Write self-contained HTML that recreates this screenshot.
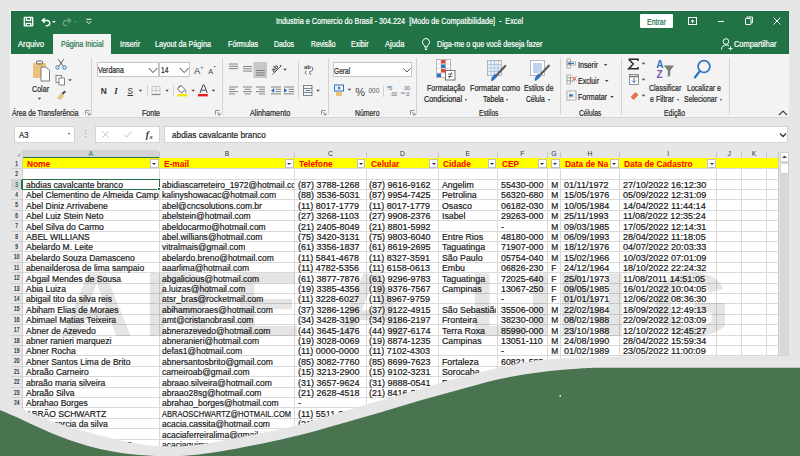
<!DOCTYPE html><html><head><meta charset="utf-8"><title>Excel</title><style>
*{margin:0;padding:0;box-sizing:border-box}
html,body{width:800px;height:456px;overflow:hidden}
body{background:#e6e6e6;font-family:"Liberation Sans",sans-serif;position:relative;color:#262626}
.a{position:absolute;white-space:nowrap}
.t{position:absolute;white-space:nowrap;line-height:1}
.gl{position:absolute;background:#dadada}
.fb{position:absolute;width:8.6px;height:9.2px;background:#fff;border:1px solid #c0c0c8}
.fb:after{content:"";position:absolute;left:1.3px;top:3px;border-left:2.1px solid transparent;border-right:2.1px solid transparent;border-top:2.6px solid #333}
.dd{position:absolute;width:0;height:0;border-left:1.8px solid transparent;border-right:1.8px solid transparent;border-top:2.2px solid #444}
.sep{position:absolute;width:1px;background:#d4d4d4;top:58px;height:57px}
.clip{position:absolute;overflow:hidden}
.rs{-webkit-text-stroke:0.2px currentColor}
</style></head><body>
<div class="a" style="left:10.2px;top:10.2px;width:779.3px;height:108px;border:1px solid #f4f4f4;border-bottom:none"></div>
<div class="a" style="left:11px;top:11px;width:777.5px;height:43px;background:#217346;box-shadow:inset 1px 1px 0 #1c6a3e,inset -1px 0 0 #1c6a3e"></div>
<div class="a" style="left:53.3px;top:33.5px;width:57.7px;height:21px;background:#f3f3f3"></div>
<svg class="a" style="left:22px;top:15px" width="72" height="14" viewBox="0 0 72 14">
<g fill="none" stroke="#fff" stroke-width="1.3">
<rect x="2.3" y="2.3" width="8.4" height="8.6" rx="0.5"/>
<path d="M4.5 2.3v3h4.2v-3M4.2 10.9v-2.6h4.6v2.6"/>
<path d="M21 5.5h4.2a2.6 2.6 0 0 1 0 5.2h-1.5M22.8 3.2L20.3 5.5L22.8 7.8" stroke-width="1.4"/>
</g>
<path d="M30.2 6.0h3.6l-1.8 2z" fill="#fff"/>
<g fill="none" stroke="#6fa585" stroke-width="1.3"><path d="M48 5.5h-4.2a2.6 2.6 0 0 0 0 5.2h1.5M46.2 3.2L48.7 5.5L46.2 7.8"/></g>
<path d="M52 6.2h2.6l-1.3 1.4z" fill="#6fa585"/>
<g fill="none" stroke="#fff" stroke-width="1"><path d="M64.3 4.3h5"/><path d="M64.5 6.3l2.3 2.3l2.3-2.3"/></g>
</svg>
<div class="t rs" style="left:276.20px;top:15.87px;font:normal normal 8.3px &quot;Liberation Sans&quot;;color:#fff;transform:scaleX(0.8695);transform-origin:0 0;">Industria e Comercio do Brasil - 304.224 &nbsp;[Modo de Compatibilidade] &nbsp;- &nbsp;Excel</div>
<div class="a" style="left:640.4px;top:14.4px;width:32.2px;height:13.2px;background:#fff;border-radius:1px"></div>
<div class="t rs" style="left:647.00px;top:17.27px;font:normal normal 8.3px &quot;Liberation Sans&quot;;color:#217346;transform:scaleX(0.8409);transform-origin:0 0;">Entrar</div>
<svg class="a" style="left:686px;top:15px" width="100" height="12" viewBox="0 0 100 12">
<g fill="none" stroke="#fff" stroke-width="1">
<rect x="2.5" y="2.5" width="8" height="7"/><path d="M4.7 6.8l1.8-1.8l1.8 1.8M6.5 5v3"/>
<path d="M32 6.5h6"/>
<rect x="59.5" y="3.5" width="5.5" height="6" rx="0.6"/><path d="M61 3V2h5.5v5.8h-1.4"/>
<path d="M87.5 2.5l7 7M94.5 2.5l-7 7"/>
</g></svg>
<div class="t rs" style="left:18.30px;top:39.49px;font:normal normal 8.4px &quot;Liberation Sans&quot;;color:#fff;transform:scaleX(0.9156);transform-origin:0 0;">Arquivo</div>
<div class="t rs" style="left:60.80px;top:39.49px;font:normal normal 8.4px &quot;Liberation Sans&quot;;color:#217346;transform:scaleX(0.8531);transform-origin:0 0;">Página Inicial</div>
<div class="t rs" style="left:119.60px;top:39.49px;font:normal normal 8.4px &quot;Liberation Sans&quot;;color:#fff;transform:scaleX(0.8638);transform-origin:0 0;">Inserir</div>
<div class="t rs" style="left:155.30px;top:39.49px;font:normal normal 8.4px &quot;Liberation Sans&quot;;color:#fff;transform:scaleX(0.8575);transform-origin:0 0;">Layout da Página</div>
<div class="t rs" style="left:227.60px;top:39.49px;font:normal normal 8.4px &quot;Liberation Sans&quot;;color:#fff;transform:scaleX(0.8653);transform-origin:0 0;">Fórmulas</div>
<div class="t rs" style="left:274.00px;top:39.49px;font:normal normal 8.4px &quot;Liberation Sans&quot;;color:#fff;transform:scaleX(0.8261);transform-origin:0 0;">Dados</div>
<div class="t rs" style="left:310.50px;top:39.49px;font:normal normal 8.4px &quot;Liberation Sans&quot;;color:#fff;transform:scaleX(0.8064);transform-origin:0 0;">Revisão</div>
<div class="t rs" style="left:351.00px;top:39.49px;font:normal normal 8.4px &quot;Liberation Sans&quot;;color:#fff;transform:scaleX(0.8357);transform-origin:0 0;">Exibir</div>
<div class="t rs" style="left:384.60px;top:39.49px;font:normal normal 8.4px &quot;Liberation Sans&quot;;color:#fff;transform:scaleX(0.9057);transform-origin:0 0;">Ajuda</div>
<div class="t rs" style="left:437.00px;top:39.49px;font:normal normal 8.4px &quot;Liberation Sans&quot;;color:#fff;transform:scaleX(0.8584);transform-origin:0 0;">Diga-me o que você deseja fazer</div>
<div class="t rs" style="left:733.50px;top:39.49px;font:normal normal 8.4px &quot;Liberation Sans&quot;;color:#fff;transform:scaleX(0.8865);transform-origin:0 0;">Compartilhar</div>
<svg class="a" style="left:420px;top:37px" width="12" height="14" viewBox="0 0 12 14"><g fill="none" stroke="#fff" stroke-width="1"><path d="M6 1.5a3.6 3.6 0 0 0-2.2 6.4c.6.5.8 1.1.8 1.8h2.8c0-.7.2-1.3.8-1.8A3.6 3.6 0 0 0 6 1.5z"/><path d="M4.7 11h2.6M5 12.5h2"/></g></svg>
<svg class="a" style="left:720px;top:37px" width="14" height="14" viewBox="0 0 14 14"><g fill="none" stroke="#fff" stroke-width="1"><circle cx="6" cy="4.5" r="2.8"/><path d="M1.5 12.5c0-2.8 2-4.5 4.5-4.5c1.2 0 2.2.3 3 1"/><path d="M10.5 9.5v4M8.5 11.5h4"/></g></svg>
<div class="a" style="left:11px;top:54px;width:777.5px;height:64.3px;background:#f3f3f3;border-bottom:1px solid #d6d6d6"></div>
<div class="sep" style="left:91.0px"></div>
<div class="sep" style="left:221.8px"></div>
<div class="sep" style="left:327.8px"></div>
<div class="sep" style="left:416.2px"></div>
<div class="sep" style="left:559.5px"></div>
<div class="sep" style="left:621.3px"></div>
<div class="sep" style="left:728.7px"></div>
<div class="a" style="left:146.5px;top:85px;width:1px;height:12px;background:#d2d2d2"></div>
<div class="a" style="left:173px;top:85px;width:1px;height:12px;background:#d2d2d2"></div>
<div class="a" style="left:297.8px;top:61px;width:1px;height:38px;background:#d2d2d2"></div>
<div class="a" style="left:383px;top:85px;width:1px;height:12px;background:#d2d2d2"></div>
<div class="t rs" style="left:12.30px;top:108.76px;font:normal normal 8.2px &quot;Liberation Sans&quot;;color:#262626;transform:scaleX(0.8265);transform-origin:0 0;">Área de Transferência</div>
<div class="t rs" style="left:142.00px;top:108.76px;font:normal normal 8.2px &quot;Liberation Sans&quot;;color:#262626;transform:scaleX(0.8597);transform-origin:0 0;">Fonte</div>
<div class="t rs" style="left:249.50px;top:108.76px;font:normal normal 8.2px &quot;Liberation Sans&quot;;color:#262626;transform:scaleX(0.8832);transform-origin:0 0;">Alinhamento</div>
<div class="t rs" style="left:354.50px;top:108.76px;font:normal normal 8.2px &quot;Liberation Sans&quot;;color:#262626;transform:scaleX(0.8413);transform-origin:0 0;">Número</div>
<div class="t rs" style="left:478.60px;top:108.76px;font:normal normal 8.2px &quot;Liberation Sans&quot;;color:#262626;transform:scaleX(0.8045);transform-origin:0 0;">Estilos</div>
<div class="t rs" style="left:578.80px;top:108.76px;font:normal normal 8.2px &quot;Liberation Sans&quot;;color:#262626;transform:scaleX(0.8130);transform-origin:0 0;">Células</div>
<div class="t rs" style="left:664.00px;top:108.76px;font:normal normal 8.2px &quot;Liberation Sans&quot;;color:#262626;transform:scaleX(0.8389);transform-origin:0 0;">Edição</div>
<svg class="a" style="left:85px;top:110px" width="6" height="6" viewBox="0 0 6 6"><g fill="none" stroke="#777" stroke-width="0.8"><path d="M0.5 4.5v-4h4"/><path d="M2 2l3 3M5 2.8V5H2.8"/></g></svg>
<svg class="a" style="left:214.5px;top:110px" width="6" height="6" viewBox="0 0 6 6"><g fill="none" stroke="#777" stroke-width="0.8"><path d="M0.5 4.5v-4h4"/><path d="M2 2l3 3M5 2.8V5H2.8"/></g></svg>
<svg class="a" style="left:320.5px;top:110px" width="6" height="6" viewBox="0 0 6 6"><g fill="none" stroke="#777" stroke-width="0.8"><path d="M0.5 4.5v-4h4"/><path d="M2 2l3 3M5 2.8V5H2.8"/></g></svg>
<svg class="a" style="left:409.8px;top:110px" width="6" height="6" viewBox="0 0 6 6"><g fill="none" stroke="#777" stroke-width="0.8"><path d="M0.5 4.5v-4h4"/><path d="M2 2l3 3M5 2.8V5H2.8"/></g></svg>
<svg class="a" style="left:778px;top:110px" width="10" height="6" viewBox="0 0 10 6"><path d="M1 5l4-4l4 4" fill="none" stroke="#444" stroke-width="1.2"/></svg>
<svg class="a" style="left:30px;top:57px" width="45" height="48" viewBox="0 0 45 48">
<rect x="3" y="6" width="13" height="15" rx="1" fill="#e9c27c"/>
<rect x="6.5" y="4" width="6" height="3" rx="1" fill="none" stroke="#6b6b6b" stroke-width="1"/>
<path d="M11 10h5l3.5 3.5V24H11z" fill="#fff" stroke="#6b6b6b" stroke-width="0.9"/>
<g fill="none" stroke="#555" stroke-width="0.9"><path d="M28 2l5 7M34 2l-5 7"/></g>
<g fill="none" stroke="#2f73c0" stroke-width="1"><circle cx="27.5" cy="10.5" r="1.7"/><circle cx="34.5" cy="10.5" r="1.7"/></g>
<g fill="#fff" stroke="#6b6b6b" stroke-width="0.8"><rect x="26" y="18.5" width="5.5" height="7"/><rect x="29" y="21" width="5.5" height="7"/></g>
<path d="M38.2 22.3h3.6l-1.8 2z" fill="#444"/>
<path d="M27 41l4-4.5l3 2.5l-4 4z" fill="#e9c27c"/><path d="M31.5 36.5l3-3l1.5 1.3l-3 3z" fill="#444"/>
<path d="M7.7 40.8h3.6l-1.8 2z" fill="#444"/>
</svg>
<div class="t rs" style="left:32.00px;top:84.47px;font:normal normal 8.3px &quot;Liberation Sans&quot;;color:#262626;transform:scaleX(0.8574);transform-origin:0 0;">Colar</div>
<div class="a" style="left:96.6px;top:62.2px;width:62px;height:15.2px;background:#fff;border:1px solid #c6c6c6"></div>
<div class="a" style="left:158.6px;top:62.2px;width:31.4px;height:15.2px;background:#fff;border:1px solid #c6c6c6"></div>
<div class="t rs" style="left:98.20px;top:65.20px;font:normal normal 8.5px &quot;Liberation Sans&quot;;color:#262626;transform:scaleX(0.8147);transform-origin:0 0;">Verdana</div>
<div class="t rs" style="left:161.00px;top:65.20px;font:normal normal 8.5px &quot;Liberation Sans&quot;;color:#262626;transform:scaleX(0.7827);transform-origin:0 0;">14</div>
<svg class="a" style="left:140px;top:66px" width="80" height="10" viewBox="0 0 80 10"><g fill="none" stroke="#444" stroke-width="1"><path d="M8.6 2l4.4 4.6l4.4-4.6M39.8 2l4.4 4.6l4.4-4.6"/></g>
<text x="54" y="8.3" font-family="Liberation Sans" font-size="9.5" fill="#444">A</text><path d="M60.5 2.2l1.4-1.8l1.4 1.8z" fill="#2f73c0"/>
<text x="68.3" y="8.3" font-family="Liberation Sans" font-size="7.3" fill="#444">A</text><path d="M73.3 -0.2h2.8l-1.4 1.8z" fill="#2f73c0"/>
</svg>
<div class="t" style="left:100.8px;top:87px;font-size:8.3px;font-weight:bold;color:#333">N</div>
<div class="t" style="left:114.3px;top:86.6px;font-size:8.8px;font-style:italic;font-weight:bold;font-family:'Liberation Serif';color:#333">I</div>
<div class="t" style="left:127.5px;top:87px;font-size:8.3px;text-decoration:underline;color:#333">S</div>
<svg class="a" style="left:136px;top:83.3px" width="82" height="16" viewBox="0 0 82 16">
<path d="M2.7 6.8h3.6l-1.8 2z" fill="#444"/>
<g fill="none" stroke="#a5a5a5" stroke-width="0.8"><path d="M16 3.5h8v8M16 3.5v8" stroke-dasharray="1 0.6"/><path d="M20 3.5v8M16 7.5h8" stroke-dasharray="1 0.6"/></g><path d="M15.6 11.6h8.8" stroke="#777" stroke-width="1"/>
<path d="M29.2 6.8h3.6l-1.8 2z" fill="#444"/>
<path d="M45 2.5l4 4l-3.5 3.5l-4-4z" fill="#fff" stroke="#555" stroke-width="0.9"/><path d="M42 4.5l3-2" stroke="#555" stroke-width="0.9"/><path d="M49.5 7c.9 1.1 1.2 2.3.2 2.7c-.7-.4-.5-1.5-.2-2.7z" fill="#2f73c0"/>
<rect x="41.5" y="11" width="10" height="2.4" fill="#f5e400"/>
<path d="M55.4 6.8h3.6l-1.8 2z" fill="#444"/>
<path d="M64 10l3-8h1.2l3 8M65.2 7.2h4.6" fill="none" stroke="#444" stroke-width="1"/>
<rect x="62" y="11" width="9.8" height="2.4" fill="#e81d1d"/>
<path d="M75.7 6.8h3.6l-1.8 2z" fill="#444"/>
</svg>
<svg class="a" style="left:226px;top:60px" width="100" height="40" viewBox="0 0 100 40">
<rect x="27.5" y="2" width="13.5" height="16" fill="#c8c8c8"/>
<g stroke="#777" stroke-width="0.9">
<path d="M3 4h9M3 6.3h9M3 8.6h9"/>
<path d="M17 6.5h9M17 8.8h9M17 11.1h9"/>
<path d="M30 10.5h9M30 12.8h9M30 15.1h9"/>
<path d="M3 27h9M3 29.3h6M3 31.6h9M3 33.9h6"/>
<path d="M17 27h9M18.5 29.3h6M17 31.6h9M18.5 33.9h6"/>
<path d="M30 27h9M33 29.3h6M30 31.6h9M33 33.9h6"/>
<path d="M45 27h10M49.5 29.3h5.5M49.5 31.6h5.5M45 33.9h10"/>
<path d="M58 27h10M62.5 29.3h5.5M62.5 31.6h5.5M58 33.9h10"/>
</g>
<path d="M45 30.5l3.2-2.4v4.8z" fill="#2f73c0"/>
<path d="M58 28.1v4.8l3.2-2.4z" fill="#2f73c0"/>
<text x="0" y="0" transform="translate(47.5 12.2) rotate(-45)" font-family="Liberation Sans" font-weight="bold" font-size="6.2" fill="#444">ab</text><path d="M46.5 14.5l8.5-8.5" stroke="#444" stroke-width="0.9"/><path d="M53.5 5.5l2-0.6l-0.6 2z" fill="#444"/>
<path d="M57.2 8.8h3.6l-1.8 2z" fill="#444"/>
<text x="78" y="9" font-family="Liberation Sans" font-weight="bold" font-size="6" fill="#444">ab</text><path d="M85.5 6.5c1.8 1 1.8 3.6 0 4.6l-2.5 1.2M80.5 10.5c-1.6 1-1.6 3 0 4" fill="none" stroke="#444" stroke-width="0.8"/><path d="M83 13.2l2.5 0.3l-1 1.5z" fill="#2f73c0"/>
<g fill="none" stroke="#777" stroke-width="0.9"><rect x="77.5" y="25.5" width="8.5" height="10"/><path d="M77.5 28.5h8.5M77.5 32.5h8.5"/></g><path d="M79.5 30.5h4.5" stroke="#2f73c0" stroke-width="0.9"/>
<path d="M90.2 29.8h3.6l-1.8 2z" fill="#444"/>
</svg>
<div class="a" style="left:332.6px;top:62.4px;width:79.4px;height:14.9px;background:#fff;border:1px solid #c6c6c6"></div>
<div class="t rs" style="left:334.40px;top:65.58px;font:normal normal 9.0px &quot;Liberation Sans&quot;;color:#262626;transform:scaleX(0.7361);transform-origin:0 0;">Geral</div>
<svg class="a" style="left:330px;top:62px" width="85" height="40" viewBox="0 0 85 40">
<path d="M73.5 6.5l3.5 3.5l3.5-3.5" fill="none" stroke="#444" stroke-width="0.9"/>
<rect x="4.5" y="23" width="9" height="6" fill="none" stroke="#2f73c0" stroke-width="1"/><circle cx="9" cy="26" r="1.3" fill="#2f73c0"/>
<rect x="6" y="30" width="6" height="4" fill="#e9c27c"/>
<path d="M17.7 26.8h3.6l-1.8 2z" fill="#444"/>
<text x="25.3" y="33.8" font-family="Liberation Sans" font-size="11" fill="#444">%</text>
<text x="38.5" y="31" font-family="Liberation Sans" font-size="6.5" fill="#555">000</text>
<text x="58" y="28" font-family="Liberation Sans" font-size="5" fill="#555">.0</text><text x="60" y="33.5" font-family="Liberation Sans" font-size="5" fill="#555">.00</text>
<path d="M57 25h4" stroke="#2f73c0" stroke-width="0.9"/>
<text x="73" y="28" font-family="Liberation Sans" font-size="5" fill="#555">.00</text><text x="75" y="33.5" font-family="Liberation Sans" font-size="5" fill="#555">.0</text>
<path d="M71 31h4" stroke="#2f73c0" stroke-width="0.9"/>
</svg>
<svg class="a" style="left:430px;top:58px" width="125" height="25" viewBox="0 0 125 25">
<g fill="#fff" stroke="#9a9a9a" stroke-width="0.7"><rect x="6.5" y="1.5" width="14" height="18"/></g>
<g stroke="#bdbdbd" stroke-width="0.6"><path d="M6.5 6h14M6.5 10.5h14M6.5 15h14M11 1.5v18M15.8 1.5v18"/></g>
<rect x="11" y="2" width="4.5" height="3.5" fill="#e8443a"/><rect x="11" y="6.5" width="4.5" height="3.5" fill="#2f73c0"/><rect x="11" y="11" width="4.5" height="3.5" fill="#e8443a"/><rect x="7" y="15.5" width="4" height="3.5" fill="#2f73c0"/>
<rect x="15.5" y="12.5" width="9.5" height="9.5" fill="#fff" stroke="#555" stroke-width="0.8"/><path d="M18 16h4.5M18 18.5h4.5M21.5 14.5l-2.5 6" stroke="#333" stroke-width="0.7"/>
<g fill="#e6eef8" stroke="#9a9a9a" stroke-width="0.7"><rect x="57.5" y="2.5" width="14" height="15"/></g>
<g stroke="#9fb8d6" stroke-width="0.7"><path d="M57.5 6.5h14M57.5 10h14M57.5 13.5h14M61 2.5v15M64.5 2.5v15M68 2.5v15"/></g>
<path d="M61.2 23.3c-0.6-2.6 1.2-5.6 3.8-7.6l2.6 2.6c-2 2.6-4.4 4.6-6.4 5z" fill="#2f73c0"/><path d="M67 16.8l8.3-8.8" stroke="#5a5a5a" stroke-width="2.2" stroke-linecap="round"/>
<g fill="#fff" stroke="#9a9a9a" stroke-width="0.7"><rect x="100.5" y="2.5" width="14" height="15"/></g>
<rect x="103" y="5" width="9" height="10" fill="#bcd4ee"/>
<path d="M104.7 23c-0.6-2.6 1.2-5.6 3.8-7.6l2.6 2.6c-2 2.6-4.4 4.6-6.4 5z" fill="#2f73c0"/><path d="M110.5 16.5l8.3-8.8" stroke="#5a5a5a" stroke-width="2.2" stroke-linecap="round"/>
</svg>
<div class="t rs" style="left:426.60px;top:84.06px;font:normal normal 8.2px &quot;Liberation Sans&quot;;color:#262626;transform:scaleX(0.8699);transform-origin:0 0;">Formatação</div>
<div class="t rs" style="left:424.00px;top:94.66px;font:normal normal 8.2px &quot;Liberation Sans&quot;;color:#262626;transform:scaleX(0.8882);transform-origin:0 0;">Condicional</div>
<div class="t rs" style="left:470.00px;top:84.06px;font:normal normal 8.2px &quot;Liberation Sans&quot;;color:#262626;transform:scaleX(0.9008);transform-origin:0 0;">Formatar como</div>
<div class="t rs" style="left:482.60px;top:94.66px;font:normal normal 8.2px &quot;Liberation Sans&quot;;color:#262626;transform:scaleX(0.8622);transform-origin:0 0;">Tabela</div>
<div class="t rs" style="left:523.60px;top:84.06px;font:normal normal 8.2px &quot;Liberation Sans&quot;;color:#262626;transform:scaleX(0.8283);transform-origin:0 0;">Estilos de</div>
<div class="t rs" style="left:526.00px;top:94.66px;font:normal normal 8.2px &quot;Liberation Sans&quot;;color:#262626;transform:scaleX(0.8013);transform-origin:0 0;">Célula</div>
<div class="dd" style="left:464.5px;top:98.5px"></div>
<div class="dd" style="left:505.5px;top:98.5px"></div>
<div class="dd" style="left:547.5px;top:98.5px"></div>
<svg class="a" style="left:564px;top:57px" width="60" height="46" viewBox="0 0 60 46">
<g fill="#fff" stroke="#8a8a8a" stroke-width="0.7"><rect x="3" y="2" width="3.5" height="3"/><rect x="3" y="5" width="3.5" height="3"/><rect x="3" y="8" width="3.5" height="3"/><rect x="6.5" y="5" width="5" height="3"/></g>
<path d="M5 6.5h5" stroke="#2f73c0" stroke-width="1"/><path d="M3.5 6.5l2-1.5v3z" fill="#2f73c0"/>
<g fill="#fff" stroke="#8a8a8a" stroke-width="0.7"><rect x="3" y="18" width="3.5" height="3"/><rect x="3" y="21" width="3.5" height="3"/><rect x="3" y="24" width="3.5" height="3"/><rect x="6.5" y="21" width="4" height="3"/></g>
<path d="M8.5 19.5l4 4M12.5 19.5l-4 4" stroke="#e8443a" stroke-width="0.9"/>
<g fill="#fff" stroke="#8a8a8a" stroke-width="0.7"><rect x="3" y="34" width="9" height="9"/></g>
<path d="M3 37h9M3 40h9M6 34v9" stroke="#b0b0b0" stroke-width="0.5"/><rect x="5" y="37.5" width="4" height="2" fill="#2f73c0"/>
<path d="M39.8 7h3.6l-1.8 1.9zM41 23h3.6l-1.8 1.9zM46.2 39h3.6l-1.8 1.9z" fill="#444"/>
</svg>
<div class="t rs" style="left:578.00px;top:60.96px;font:normal normal 8.2px &quot;Liberation Sans&quot;;color:#262626;transform:scaleX(0.8792);transform-origin:0 0;">Inserir</div>
<div class="t rs" style="left:578.00px;top:76.96px;font:normal normal 8.2px &quot;Liberation Sans&quot;;color:#262626;transform:scaleX(0.8548);transform-origin:0 0;">Excluir</div>
<div class="t rs" style="left:578.00px;top:92.96px;font:normal normal 8.2px &quot;Liberation Sans&quot;;color:#262626;transform:scaleX(0.8732);transform-origin:0 0;">Formatar</div>
<svg class="a" style="left:626px;top:57px" width="100" height="46" viewBox="0 0 100 46">
<path d="M2.5 2.2h9.5v1.8M2.7 2.2l4.6 4.8l-4.6 4.8h9.3v-1.8" fill="none" stroke="#262626" stroke-width="1.5"/>
<path d="M15.7 5.8h3.6l-1.8 2z" fill="#444"/>
<rect x="3.5" y="17.5" width="9" height="10" fill="#fff" stroke="#777" stroke-width="0.8"/><path d="M3.5 19.5h9" stroke="#777" stroke-width="1.6"/><path d="M8 21v4.5M6 23.5l2 2l2-2" fill="none" stroke="#2f73c0" stroke-width="1"/>
<path d="M15.7 21.8h3.6l-1.8 2z" fill="#444"/>
<path d="M4.5 40l5-5l3 3l-5 5z" fill="#e8744a"/>
<path d="M15.7 37.8h3.6l-1.8 2z" fill="#444"/>
<text x="30.2" y="11.2" font-family="Liberation Sans" font-weight="bold" font-size="10" fill="#2f73c0">A</text>
<text x="30.6" y="21.2" font-family="Liberation Sans" font-weight="bold" font-size="10" fill="#7a5aa8">Z</text>
<path d="M37.8 8.5h10.3l-3.9 5v5.2l-2.4 1.2v-6.4z" fill="#7d7d7d"/>
<circle cx="78" cy="9.6" r="5.9" fill="none" stroke="#2f73c0" stroke-width="1.7"/><path d="M73.9 14l-5 6.5" stroke="#2f73c0" stroke-width="2.2" stroke-linecap="round"/>
</svg>
<div class="t rs" style="left:648.80px;top:84.06px;font:normal normal 8.2px &quot;Liberation Sans&quot;;color:#262626;transform:scaleX(0.8528);transform-origin:0 0;">Classificar</div>
<div class="t rs" style="left:650.00px;top:94.66px;font:normal normal 8.2px &quot;Liberation Sans&quot;;color:#262626;transform:scaleX(0.8649);transform-origin:0 0;">e Filtrar</div>
<div class="t rs" style="left:687.00px;top:84.06px;font:normal normal 8.2px &quot;Liberation Sans&quot;;color:#262626;transform:scaleX(0.8587);transform-origin:0 0;">Localizar e</div>
<div class="t rs" style="left:684.00px;top:94.66px;font:normal normal 8.2px &quot;Liberation Sans&quot;;color:#262626;transform:scaleX(0.8530);transform-origin:0 0;">Selecionar</div>
<div class="dd" style="left:676.5px;top:98.5px"></div>
<div class="dd" style="left:719.5px;top:98.5px"></div>
<div class="a" style="left:14px;top:125.8px;width:61.4px;height:17.5px;background:#fff;border:1px solid #d4d4d4"></div>
<div class="t rs" style="left:18.75px;top:130.47px;font:normal normal 8.3px &quot;Liberation Sans&quot;;color:#262626;transform:scaleX(0.9312);transform-origin:0 0;">A3</div>
<div class="dd" style="left:67.5px;top:133px;border-top-width:2.5px;border-top-color:#444"></div>
<div class="a" style="left:84.5px;top:130px;width:1px;height:1px;background:#999;box-shadow:0 3px #999,0 6px #999"></div>
<div class="a" style="left:94.5px;top:125.8px;width:65.7px;height:17.5px;background:#fff;border:1px solid #d4d4d4"></div>
<svg class="a" style="left:95px;top:126px" width="65" height="17" viewBox="0 0 65 17"><g fill="none" stroke="#b5b5b5" stroke-width="0.9"><path d="M7.5 5.5l6 6M13.5 5.5l-6 6"/><path d="M29 8.5l2.5 2.5l5-5.5"/></g>
<text x="50.8" y="12.2" font-family="Liberation Serif" font-style="italic" font-weight="bold" font-size="9.5" fill="#333">f</text><text x="54.6" y="12.6" font-family="Liberation Serif" font-style="italic" font-weight="bold" font-size="6.5" fill="#333">x</text></svg>
<div class="a" style="left:163.8px;top:125.8px;width:623.8px;height:17.5px;background:#fff;border:1px solid #d4d4d4"></div>
<div class="t rs" style="left:171.70px;top:130.47px;font:normal normal 8.3px &quot;Liberation Sans&quot;;color:#262626;transform:scaleX(0.9969);transform-origin:0 0;">abdias cavalcante branco</div>
<svg class="a" style="left:779px;top:132px" width="8" height="6" viewBox="0 0 8 6"><path d="M1 1.5l3 3l3-3" fill="none" stroke="#333" stroke-width="1.3"/></svg>
<div class="a" style="left:22.3px;top:158.3px;width:755.9000000000001px;height:291.2px;background:#fff"></div>
<div class="a" style="left:11px;top:150.3px;width:767.2px;height:8px;background:#e6e6e6"></div>
<div class="a" style="left:22.3px;top:150.3px;width:137.2px;height:8px;background:#d3d3d3;border-bottom:1.5px solid #217346"></div>
<div class="a" style="left:11px;top:158.3px;width:11.3px;height:291.2px;background:#e6e6e6"></div>
<div class="a" style="left:11px;top:179.10000000000002px;width:11.3px;height:10.4px;background:#d3d3d3;border-right:1.5px solid #217346"></div>
<div class="gl" style="left:159.00px;top:158.3px;width:1px;height:291.2px"></div>
<div class="a" style="left:159.00px;top:151.5px;width:1px;height:6px;background:#c8c8c8"></div>
<div class="t" style="left:80.90px;width:20px;text-align:center;top:151.0px;font-size:6.8px;color:#217346">A</div>
<div class="gl" style="left:294.00px;top:158.3px;width:1px;height:291.2px"></div>
<div class="a" style="left:294.00px;top:151.5px;width:1px;height:6px;background:#c8c8c8"></div>
<div class="t" style="left:217.00px;width:20px;text-align:center;top:151.0px;font-size:6.8px;color:#333">B</div>
<div class="gl" style="left:365.80px;top:158.3px;width:1px;height:291.2px"></div>
<div class="a" style="left:365.80px;top:151.5px;width:1px;height:6px;background:#c8c8c8"></div>
<div class="t" style="left:320.40px;width:20px;text-align:center;top:151.0px;font-size:6.8px;color:#333">C</div>
<div class="gl" style="left:438.30px;top:158.3px;width:1px;height:291.2px"></div>
<div class="a" style="left:438.30px;top:151.5px;width:1px;height:6px;background:#c8c8c8"></div>
<div class="t" style="left:392.55px;width:20px;text-align:center;top:151.0px;font-size:6.8px;color:#333">D</div>
<div class="gl" style="left:496.50px;top:158.3px;width:1px;height:291.2px"></div>
<div class="a" style="left:496.50px;top:151.5px;width:1px;height:6px;background:#c8c8c8"></div>
<div class="t" style="left:457.90px;width:20px;text-align:center;top:151.0px;font-size:6.8px;color:#333">E</div>
<div class="gl" style="left:547.00px;top:158.3px;width:1px;height:291.2px"></div>
<div class="a" style="left:547.00px;top:151.5px;width:1px;height:6px;background:#c8c8c8"></div>
<div class="t" style="left:512.25px;width:20px;text-align:center;top:151.0px;font-size:6.8px;color:#333">F</div>
<div class="gl" style="left:560.00px;top:158.3px;width:1px;height:291.2px"></div>
<div class="a" style="left:560.00px;top:151.5px;width:1px;height:6px;background:#c8c8c8"></div>
<div class="t" style="left:544.00px;width:20px;text-align:center;top:151.0px;font-size:6.8px;color:#333">G</div>
<div class="gl" style="left:619.10px;top:158.3px;width:1px;height:291.2px"></div>
<div class="a" style="left:619.10px;top:151.5px;width:1px;height:6px;background:#c8c8c8"></div>
<div class="t" style="left:580.05px;width:20px;text-align:center;top:151.0px;font-size:6.8px;color:#333">H</div>
<div class="gl" style="left:716.30px;top:158.3px;width:1px;height:291.2px"></div>
<div class="a" style="left:716.30px;top:151.5px;width:1px;height:6px;background:#c8c8c8"></div>
<div class="t" style="left:658.20px;width:20px;text-align:center;top:151.0px;font-size:6.8px;color:#333">I</div>
<div class="gl" style="left:741.00px;top:158.3px;width:1px;height:291.2px"></div>
<div class="a" style="left:741.00px;top:151.5px;width:1px;height:6px;background:#c8c8c8"></div>
<div class="t" style="left:719.15px;width:20px;text-align:center;top:151.0px;font-size:6.8px;color:#333">J</div>
<div class="gl" style="left:765.90px;top:158.3px;width:1px;height:291.2px"></div>
<div class="a" style="left:765.90px;top:151.5px;width:1px;height:6px;background:#c8c8c8"></div>
<div class="t" style="left:743.95px;width:20px;text-align:center;top:151.0px;font-size:6.8px;color:#333">K</div>
<div class="gl" style="left:777.70px;top:158.3px;width:1px;height:291.2px"></div>
<div class="a" style="left:777.70px;top:151.5px;width:1px;height:6px;background:#c8c8c8"></div>
<div class="gl" style="left:22.3px;top:168.20px;width:755.9000000000001px;height:1px"></div>
<div class="a" style="left:11px;top:168.20px;width:11.3px;height:1px;background:#d0d0d0"></div>
<div class="gl" style="left:22.3px;top:178.60px;width:755.9000000000001px;height:1px"></div>
<div class="a" style="left:11px;top:178.60px;width:11.3px;height:1px;background:#d0d0d0"></div>
<div class="gl" style="left:22.3px;top:189.00px;width:755.9000000000001px;height:1px"></div>
<div class="a" style="left:11px;top:189.00px;width:11.3px;height:1px;background:#d0d0d0"></div>
<div class="gl" style="left:22.3px;top:199.40px;width:755.9000000000001px;height:1px"></div>
<div class="a" style="left:11px;top:199.40px;width:11.3px;height:1px;background:#d0d0d0"></div>
<div class="gl" style="left:22.3px;top:209.80px;width:755.9000000000001px;height:1px"></div>
<div class="a" style="left:11px;top:209.80px;width:11.3px;height:1px;background:#d0d0d0"></div>
<div class="gl" style="left:22.3px;top:220.20px;width:755.9000000000001px;height:1px"></div>
<div class="a" style="left:11px;top:220.20px;width:11.3px;height:1px;background:#d0d0d0"></div>
<div class="gl" style="left:22.3px;top:230.60px;width:755.9000000000001px;height:1px"></div>
<div class="a" style="left:11px;top:230.60px;width:11.3px;height:1px;background:#d0d0d0"></div>
<div class="gl" style="left:22.3px;top:241.00px;width:755.9000000000001px;height:1px"></div>
<div class="a" style="left:11px;top:241.00px;width:11.3px;height:1px;background:#d0d0d0"></div>
<div class="gl" style="left:22.3px;top:251.40px;width:755.9000000000001px;height:1px"></div>
<div class="a" style="left:11px;top:251.40px;width:11.3px;height:1px;background:#d0d0d0"></div>
<div class="gl" style="left:22.3px;top:261.80px;width:755.9000000000001px;height:1px"></div>
<div class="a" style="left:11px;top:261.80px;width:11.3px;height:1px;background:#d0d0d0"></div>
<div class="gl" style="left:22.3px;top:272.20px;width:755.9000000000001px;height:1px"></div>
<div class="a" style="left:11px;top:272.20px;width:11.3px;height:1px;background:#d0d0d0"></div>
<div class="gl" style="left:22.3px;top:282.60px;width:755.9000000000001px;height:1px"></div>
<div class="a" style="left:11px;top:282.60px;width:11.3px;height:1px;background:#d0d0d0"></div>
<div class="gl" style="left:22.3px;top:293.00px;width:755.9000000000001px;height:1px"></div>
<div class="a" style="left:11px;top:293.00px;width:11.3px;height:1px;background:#d0d0d0"></div>
<div class="gl" style="left:22.3px;top:303.40px;width:755.9000000000001px;height:1px"></div>
<div class="a" style="left:11px;top:303.40px;width:11.3px;height:1px;background:#d0d0d0"></div>
<div class="gl" style="left:22.3px;top:313.80px;width:755.9000000000001px;height:1px"></div>
<div class="a" style="left:11px;top:313.80px;width:11.3px;height:1px;background:#d0d0d0"></div>
<div class="gl" style="left:22.3px;top:324.20px;width:755.9000000000001px;height:1px"></div>
<div class="a" style="left:11px;top:324.20px;width:11.3px;height:1px;background:#d0d0d0"></div>
<div class="gl" style="left:22.3px;top:334.60px;width:755.9000000000001px;height:1px"></div>
<div class="a" style="left:11px;top:334.60px;width:11.3px;height:1px;background:#d0d0d0"></div>
<div class="gl" style="left:22.3px;top:345.00px;width:755.9000000000001px;height:1px"></div>
<div class="a" style="left:11px;top:345.00px;width:11.3px;height:1px;background:#d0d0d0"></div>
<div class="gl" style="left:22.3px;top:355.40px;width:755.9000000000001px;height:1px"></div>
<div class="a" style="left:11px;top:355.40px;width:11.3px;height:1px;background:#d0d0d0"></div>
<div class="gl" style="left:22.3px;top:365.80px;width:755.9000000000001px;height:1px"></div>
<div class="a" style="left:11px;top:365.80px;width:11.3px;height:1px;background:#d0d0d0"></div>
<div class="gl" style="left:22.3px;top:376.20px;width:755.9000000000001px;height:1px"></div>
<div class="a" style="left:11px;top:376.20px;width:11.3px;height:1px;background:#d0d0d0"></div>
<div class="gl" style="left:22.3px;top:386.60px;width:755.9000000000001px;height:1px"></div>
<div class="a" style="left:11px;top:386.60px;width:11.3px;height:1px;background:#d0d0d0"></div>
<div class="gl" style="left:22.3px;top:397.00px;width:755.9000000000001px;height:1px"></div>
<div class="a" style="left:11px;top:397.00px;width:11.3px;height:1px;background:#d0d0d0"></div>
<div class="gl" style="left:22.3px;top:407.40px;width:755.9000000000001px;height:1px"></div>
<div class="a" style="left:11px;top:407.40px;width:11.3px;height:1px;background:#d0d0d0"></div>
<div class="gl" style="left:22.3px;top:417.80px;width:755.9000000000001px;height:1px"></div>
<div class="a" style="left:11px;top:417.80px;width:11.3px;height:1px;background:#d0d0d0"></div>
<div class="gl" style="left:22.3px;top:428.20px;width:755.9000000000001px;height:1px"></div>
<div class="a" style="left:11px;top:428.20px;width:11.3px;height:1px;background:#d0d0d0"></div>
<div class="gl" style="left:22.3px;top:438.60px;width:755.9000000000001px;height:1px"></div>
<div class="a" style="left:11px;top:438.60px;width:11.3px;height:1px;background:#d0d0d0"></div>
<div class="gl" style="left:22.3px;top:449.00px;width:755.9000000000001px;height:1px"></div>
<div class="a" style="left:11px;top:449.00px;width:11.3px;height:1px;background:#d0d0d0"></div>
<div class="t rs" style="left:11px;width:11.3px;text-align:center;top:160.80px;font-size:6.8px;color:#222;transform:scaleX(0.72)">1</div>
<div class="t rs" style="left:11px;width:11.3px;text-align:center;top:171.20px;font-size:6.8px;color:#222;transform:scaleX(0.72)">2</div>
<div class="t rs" style="left:11px;width:11.3px;text-align:center;top:181.60px;font-size:6.8px;color:#217346;transform:scaleX(0.72)">3</div>
<div class="t rs" style="left:11px;width:11.3px;text-align:center;top:192.00px;font-size:6.8px;color:#222;transform:scaleX(0.72)">4</div>
<div class="t rs" style="left:11px;width:11.3px;text-align:center;top:202.40px;font-size:6.8px;color:#222;transform:scaleX(0.72)">5</div>
<div class="t rs" style="left:11px;width:11.3px;text-align:center;top:212.80px;font-size:6.8px;color:#222;transform:scaleX(0.72)">6</div>
<div class="t rs" style="left:11px;width:11.3px;text-align:center;top:223.20px;font-size:6.8px;color:#222;transform:scaleX(0.72)">7</div>
<div class="t rs" style="left:11px;width:11.3px;text-align:center;top:233.60px;font-size:6.8px;color:#222;transform:scaleX(0.72)">8</div>
<div class="t rs" style="left:11px;width:11.3px;text-align:center;top:244.00px;font-size:6.8px;color:#222;transform:scaleX(0.72)">9</div>
<div class="t rs" style="left:11px;width:11.3px;text-align:center;top:254.40px;font-size:6.8px;color:#222;transform:scaleX(0.72)">10</div>
<div class="t rs" style="left:11px;width:11.3px;text-align:center;top:264.80px;font-size:6.8px;color:#222;transform:scaleX(0.72)">11</div>
<div class="t rs" style="left:11px;width:11.3px;text-align:center;top:275.20px;font-size:6.8px;color:#222;transform:scaleX(0.72)">12</div>
<div class="t rs" style="left:11px;width:11.3px;text-align:center;top:285.60px;font-size:6.8px;color:#222;transform:scaleX(0.72)">13</div>
<div class="t rs" style="left:11px;width:11.3px;text-align:center;top:296.00px;font-size:6.8px;color:#222;transform:scaleX(0.72)">14</div>
<div class="t rs" style="left:11px;width:11.3px;text-align:center;top:306.40px;font-size:6.8px;color:#222;transform:scaleX(0.72)">15</div>
<div class="t rs" style="left:11px;width:11.3px;text-align:center;top:316.80px;font-size:6.8px;color:#222;transform:scaleX(0.72)">16</div>
<div class="t rs" style="left:11px;width:11.3px;text-align:center;top:327.20px;font-size:6.8px;color:#222;transform:scaleX(0.72)">17</div>
<div class="t rs" style="left:11px;width:11.3px;text-align:center;top:337.60px;font-size:6.8px;color:#222;transform:scaleX(0.72)">18</div>
<div class="t rs" style="left:11px;width:11.3px;text-align:center;top:348.00px;font-size:6.8px;color:#222;transform:scaleX(0.72)">19</div>
<div class="t rs" style="left:11px;width:11.3px;text-align:center;top:358.40px;font-size:6.8px;color:#222;transform:scaleX(0.72)">20</div>
<div class="t rs" style="left:11px;width:11.3px;text-align:center;top:368.80px;font-size:6.8px;color:#222;transform:scaleX(0.72)">21</div>
<div class="t rs" style="left:11px;width:11.3px;text-align:center;top:379.20px;font-size:6.8px;color:#222;transform:scaleX(0.72)">22</div>
<div class="t rs" style="left:11px;width:11.3px;text-align:center;top:389.60px;font-size:6.8px;color:#222;transform:scaleX(0.72)">23</div>
<div class="t rs" style="left:11px;width:11.3px;text-align:center;top:400.00px;font-size:6.8px;color:#222;transform:scaleX(0.72)">24</div>
<div class="t rs" style="left:11px;width:11.3px;text-align:center;top:410.40px;font-size:6.8px;color:#222;transform:scaleX(0.72)">25</div>
<div class="t rs" style="left:11px;width:11.3px;text-align:center;top:420.80px;font-size:6.8px;color:#222;transform:scaleX(0.72)">26</div>
<div class="t rs" style="left:11px;width:11.3px;text-align:center;top:431.20px;font-size:6.8px;color:#222;transform:scaleX(0.72)">27</div>
<div class="t rs" style="left:11px;width:11.3px;text-align:center;top:441.60px;font-size:6.8px;color:#222;transform:scaleX(0.72)">28</div>
<div class="a" style="left:22.3px;top:158.3px;width:755.9000000000001px;height:10.0px;background:#ffff00"></div>
<div class="a" style="left:21.6px;top:150.3px;width:0.8px;height:299.2px;background:#cdcdcd"></div>
<div class="clip" style="left:23.30px;top:158.30px;width:126.20px;height:10.4px">
<div class="t" style="left:3.5px;top:1.09px;font:bold 8.4px 'Liberation Sans';color:#ff0000;transform:scaleX(0.9959);transform-origin:0 0">Nome</div></div>
<div class="fb" style="left:150.10px;top:158.5px"></div>
<div class="clip" style="left:160.50px;top:158.30px;width:124.00px;height:10.4px">
<div class="t" style="left:3.5px;top:1.09px;font:bold 8.4px 'Liberation Sans';color:#ff0000;transform:scaleX(0.9959);transform-origin:0 0">E-mail</div></div>
<div class="fb" style="left:285.10px;top:158.5px"></div>
<div class="clip" style="left:295.50px;top:158.30px;width:60.80px;height:10.4px">
<div class="t" style="left:3.5px;top:1.09px;font:bold 8.4px 'Liberation Sans';color:#ff0000;transform:scaleX(0.9959);transform-origin:0 0">Telefone</div></div>
<div class="fb" style="left:356.90px;top:158.5px"></div>
<div class="clip" style="left:367.30px;top:158.30px;width:61.50px;height:10.4px">
<div class="t" style="left:3.5px;top:1.09px;font:bold 8.4px 'Liberation Sans';color:#ff0000;transform:scaleX(0.9959);transform-origin:0 0">Celular</div></div>
<div class="fb" style="left:429.40px;top:158.5px"></div>
<div class="clip" style="left:439.80px;top:158.30px;width:47.20px;height:10.4px">
<div class="t" style="left:3.5px;top:1.09px;font:bold 8.4px 'Liberation Sans';color:#ff0000;transform:scaleX(0.9959);transform-origin:0 0">Cidade</div></div>
<div class="fb" style="left:487.60px;top:158.5px"></div>
<div class="clip" style="left:498.00px;top:158.30px;width:39.50px;height:10.4px">
<div class="t" style="left:3.5px;top:1.09px;font:bold 8.4px 'Liberation Sans';color:#ff0000;transform:scaleX(0.9959);transform-origin:0 0">CEP</div></div>
<div class="fb" style="left:538.10px;top:158.5px"></div>
<div class="fb" style="left:551.10px;top:158.5px"></div>
<div class="clip" style="left:561.50px;top:158.30px;width:48.10px;height:10.4px">
<div class="t" style="left:3.5px;top:1.09px;font:bold 8.4px 'Liberation Sans';color:#ff0000;transform:scaleX(0.9959);transform-origin:0 0">Data de Na</div></div>
<div class="fb" style="left:610.20px;top:158.5px"></div>
<div class="clip" style="left:620.60px;top:158.30px;width:86.20px;height:10.4px">
<div class="t" style="left:3.5px;top:1.09px;font:bold 8.4px 'Liberation Sans';color:#ff0000;transform:scaleX(0.9959);transform-origin:0 0">Data de Cadastro</div></div>
<div class="fb" style="left:707.40px;top:158.5px"></div>
<div class="clip" style="left:22.30px;top:179.10px;width:136.70px;height:13.4px">
<div class="t" style="left:3.70px;top:1.89px;font-size:8.4px;color:#141414;-webkit-text-stroke:0.17px #141414;transform:scaleX(1.0200);transform-origin:0 0">abdias cavalcante branco</div></div>
<div class="clip" style="left:159.50px;top:179.10px;width:134.50px;height:13.4px">
<div class="t" style="left:2.50px;top:1.89px;font-size:8.4px;color:#141414;-webkit-text-stroke:0.17px #141414;transform:scaleX(1.0160);transform-origin:0 0">abidiascarreteiro_1972@hotmail.com</div></div>
<div class="clip" style="left:294.50px;top:179.10px;width:71.30px;height:13.4px">
<div class="t" style="left:3.00px;top:1.89px;font-size:8.4px;color:#141414;-webkit-text-stroke:0.17px #141414;transform:scaleX(1.0750);transform-origin:0 0">(87) 3788-1268</div></div>
<div class="clip" style="left:366.30px;top:179.10px;width:72.00px;height:13.4px">
<div class="t" style="left:3.20px;top:1.89px;font-size:8.4px;color:#141414;-webkit-text-stroke:0.17px #141414;transform:scaleX(1.0750);transform-origin:0 0">(87) 9616-9162</div></div>
<div class="clip" style="left:438.80px;top:179.10px;width:57.70px;height:13.4px">
<div class="t" style="left:3.50px;top:1.89px;font-size:8.4px;color:#141414;-webkit-text-stroke:0.17px #141414;transform:scaleX(1.0500);transform-origin:0 0">Angelim</div></div>
<div class="clip" style="left:497.00px;top:179.10px;width:50.00px;height:13.4px">
<div class="t" style="left:3.50px;top:1.89px;font-size:8.4px;color:#141414;-webkit-text-stroke:0.17px #141414;transform:scaleX(1.0600);transform-origin:0 0">55430-000</div></div>
<div class="clip" style="left:547.50px;top:179.10px;width:12.50px;height:13.4px">
<div class="t" style="left:3.80px;top:1.89px;font-size:8.4px;color:#141414;-webkit-text-stroke:0.17px #141414;transform:scaleX(1.0000);transform-origin:0 0">M</div></div>
<div class="clip" style="left:560.50px;top:179.10px;width:58.60px;height:13.4px">
<div class="t" style="left:3.70px;top:1.89px;font-size:8.4px;color:#141414;-webkit-text-stroke:0.17px #141414;transform:scaleX(1.0800);transform-origin:0 0">01/11/1972</div></div>
<div class="clip" style="left:619.60px;top:179.10px;width:96.70px;height:13.4px">
<div class="t" style="left:3.70px;top:1.89px;font-size:8.4px;color:#141414;-webkit-text-stroke:0.17px #141414;transform:scaleX(1.0850);transform-origin:0 0">27/10/2022 16:12:30</div></div>
<div class="clip" style="left:22.30px;top:189.50px;width:136.70px;height:13.4px">
<div class="t" style="left:3.70px;top:1.89px;font-size:8.4px;color:#141414;-webkit-text-stroke:0.17px #141414;transform:scaleX(1.0200);transform-origin:0 0">Abel Clementino de Almeida Campos</div></div>
<div class="clip" style="left:159.50px;top:189.50px;width:134.50px;height:13.4px">
<div class="t" style="left:2.50px;top:1.89px;font-size:8.4px;color:#141414;-webkit-text-stroke:0.17px #141414;transform:scaleX(1.0160);transform-origin:0 0">kalinyshowacac@hotmail.com</div></div>
<div class="clip" style="left:294.50px;top:189.50px;width:71.30px;height:13.4px">
<div class="t" style="left:3.00px;top:1.89px;font-size:8.4px;color:#141414;-webkit-text-stroke:0.17px #141414;transform:scaleX(1.0750);transform-origin:0 0">(88) 3536-5031</div></div>
<div class="clip" style="left:366.30px;top:189.50px;width:72.00px;height:13.4px">
<div class="t" style="left:3.20px;top:1.89px;font-size:8.4px;color:#141414;-webkit-text-stroke:0.17px #141414;transform:scaleX(1.0750);transform-origin:0 0">(87) 9954-7425</div></div>
<div class="clip" style="left:438.80px;top:189.50px;width:57.70px;height:13.4px">
<div class="t" style="left:3.50px;top:1.89px;font-size:8.4px;color:#141414;-webkit-text-stroke:0.17px #141414;transform:scaleX(1.0500);transform-origin:0 0">Petrolina</div></div>
<div class="clip" style="left:497.00px;top:189.50px;width:50.00px;height:13.4px">
<div class="t" style="left:3.50px;top:1.89px;font-size:8.4px;color:#141414;-webkit-text-stroke:0.17px #141414;transform:scaleX(1.0600);transform-origin:0 0">56320-680</div></div>
<div class="clip" style="left:547.50px;top:189.50px;width:12.50px;height:13.4px">
<div class="t" style="left:3.80px;top:1.89px;font-size:8.4px;color:#141414;-webkit-text-stroke:0.17px #141414;transform:scaleX(1.0000);transform-origin:0 0">M</div></div>
<div class="clip" style="left:560.50px;top:189.50px;width:58.60px;height:13.4px">
<div class="t" style="left:3.70px;top:1.89px;font-size:8.4px;color:#141414;-webkit-text-stroke:0.17px #141414;transform:scaleX(1.0800);transform-origin:0 0">15/05/1976</div></div>
<div class="clip" style="left:619.60px;top:189.50px;width:96.70px;height:13.4px">
<div class="t" style="left:3.70px;top:1.89px;font-size:8.4px;color:#141414;-webkit-text-stroke:0.17px #141414;transform:scaleX(1.0850);transform-origin:0 0">05/09/2022 12:31:09</div></div>
<div class="clip" style="left:22.30px;top:199.90px;width:136.70px;height:13.4px">
<div class="t" style="left:3.70px;top:1.89px;font-size:8.4px;color:#141414;-webkit-text-stroke:0.17px #141414;transform:scaleX(1.0200);transform-origin:0 0">Abel Diniz Arrivabene</div></div>
<div class="clip" style="left:159.50px;top:199.90px;width:134.50px;height:13.4px">
<div class="t" style="left:2.50px;top:1.89px;font-size:8.4px;color:#141414;-webkit-text-stroke:0.17px #141414;transform:scaleX(1.0160);transform-origin:0 0">abel@cncsolutions.com.br</div></div>
<div class="clip" style="left:294.50px;top:199.90px;width:71.30px;height:13.4px">
<div class="t" style="left:3.00px;top:1.89px;font-size:8.4px;color:#141414;-webkit-text-stroke:0.17px #141414;transform:scaleX(1.0750);transform-origin:0 0">(11) 8017-1779</div></div>
<div class="clip" style="left:366.30px;top:199.90px;width:72.00px;height:13.4px">
<div class="t" style="left:3.20px;top:1.89px;font-size:8.4px;color:#141414;-webkit-text-stroke:0.17px #141414;transform:scaleX(1.0750);transform-origin:0 0">(11) 8017-1779</div></div>
<div class="clip" style="left:438.80px;top:199.90px;width:57.70px;height:13.4px">
<div class="t" style="left:3.50px;top:1.89px;font-size:8.4px;color:#141414;-webkit-text-stroke:0.17px #141414;transform:scaleX(1.0500);transform-origin:0 0">Osasco</div></div>
<div class="clip" style="left:497.00px;top:199.90px;width:50.00px;height:13.4px">
<div class="t" style="left:3.50px;top:1.89px;font-size:8.4px;color:#141414;-webkit-text-stroke:0.17px #141414;transform:scaleX(1.0600);transform-origin:0 0">06182-030</div></div>
<div class="clip" style="left:547.50px;top:199.90px;width:12.50px;height:13.4px">
<div class="t" style="left:3.80px;top:1.89px;font-size:8.4px;color:#141414;-webkit-text-stroke:0.17px #141414;transform:scaleX(1.0000);transform-origin:0 0">M</div></div>
<div class="clip" style="left:560.50px;top:199.90px;width:58.60px;height:13.4px">
<div class="t" style="left:3.70px;top:1.89px;font-size:8.4px;color:#141414;-webkit-text-stroke:0.17px #141414;transform:scaleX(1.0800);transform-origin:0 0">10/05/1984</div></div>
<div class="clip" style="left:619.60px;top:199.90px;width:96.70px;height:13.4px">
<div class="t" style="left:3.70px;top:1.89px;font-size:8.4px;color:#141414;-webkit-text-stroke:0.17px #141414;transform:scaleX(1.0850);transform-origin:0 0">14/04/2022 11:44:14</div></div>
<div class="clip" style="left:22.30px;top:210.30px;width:136.70px;height:13.4px">
<div class="t" style="left:3.70px;top:1.89px;font-size:8.4px;color:#141414;-webkit-text-stroke:0.17px #141414;transform:scaleX(1.0200);transform-origin:0 0">Abel Luiz Stein Neto</div></div>
<div class="clip" style="left:159.50px;top:210.30px;width:134.50px;height:13.4px">
<div class="t" style="left:2.50px;top:1.89px;font-size:8.4px;color:#141414;-webkit-text-stroke:0.17px #141414;transform:scaleX(1.0160);transform-origin:0 0">abelstein@hotmail.com</div></div>
<div class="clip" style="left:294.50px;top:210.30px;width:71.30px;height:13.4px">
<div class="t" style="left:3.00px;top:1.89px;font-size:8.4px;color:#141414;-webkit-text-stroke:0.17px #141414;transform:scaleX(1.0750);transform-origin:0 0">(27) 3268-1103</div></div>
<div class="clip" style="left:366.30px;top:210.30px;width:72.00px;height:13.4px">
<div class="t" style="left:3.20px;top:1.89px;font-size:8.4px;color:#141414;-webkit-text-stroke:0.17px #141414;transform:scaleX(1.0750);transform-origin:0 0">(27) 9908-2376</div></div>
<div class="clip" style="left:438.80px;top:210.30px;width:57.70px;height:13.4px">
<div class="t" style="left:3.50px;top:1.89px;font-size:8.4px;color:#141414;-webkit-text-stroke:0.17px #141414;transform:scaleX(1.0500);transform-origin:0 0">Isabel</div></div>
<div class="clip" style="left:497.00px;top:210.30px;width:50.00px;height:13.4px">
<div class="t" style="left:3.50px;top:1.89px;font-size:8.4px;color:#141414;-webkit-text-stroke:0.17px #141414;transform:scaleX(1.0600);transform-origin:0 0">29263-000</div></div>
<div class="clip" style="left:547.50px;top:210.30px;width:12.50px;height:13.4px">
<div class="t" style="left:3.80px;top:1.89px;font-size:8.4px;color:#141414;-webkit-text-stroke:0.17px #141414;transform:scaleX(1.0000);transform-origin:0 0">M</div></div>
<div class="clip" style="left:560.50px;top:210.30px;width:58.60px;height:13.4px">
<div class="t" style="left:3.70px;top:1.89px;font-size:8.4px;color:#141414;-webkit-text-stroke:0.17px #141414;transform:scaleX(1.0800);transform-origin:0 0">25/11/1993</div></div>
<div class="clip" style="left:619.60px;top:210.30px;width:96.70px;height:13.4px">
<div class="t" style="left:3.70px;top:1.89px;font-size:8.4px;color:#141414;-webkit-text-stroke:0.17px #141414;transform:scaleX(1.0850);transform-origin:0 0">11/08/2022 12:35:24</div></div>
<div class="clip" style="left:22.30px;top:220.70px;width:136.70px;height:13.4px">
<div class="t" style="left:3.70px;top:1.89px;font-size:8.4px;color:#141414;-webkit-text-stroke:0.17px #141414;transform:scaleX(1.0200);transform-origin:0 0">Abel Silva do Carmo</div></div>
<div class="clip" style="left:159.50px;top:220.70px;width:134.50px;height:13.4px">
<div class="t" style="left:2.50px;top:1.89px;font-size:8.4px;color:#141414;-webkit-text-stroke:0.17px #141414;transform:scaleX(1.0160);transform-origin:0 0">abeldocarmo@hotmail.com</div></div>
<div class="clip" style="left:294.50px;top:220.70px;width:71.30px;height:13.4px">
<div class="t" style="left:3.00px;top:1.89px;font-size:8.4px;color:#141414;-webkit-text-stroke:0.17px #141414;transform:scaleX(1.0750);transform-origin:0 0">(21) 2405-8049</div></div>
<div class="clip" style="left:366.30px;top:220.70px;width:72.00px;height:13.4px">
<div class="t" style="left:3.20px;top:1.89px;font-size:8.4px;color:#141414;-webkit-text-stroke:0.17px #141414;transform:scaleX(1.0750);transform-origin:0 0">(21) 8801-5992</div></div>
<div class="clip" style="left:497.00px;top:220.70px;width:50.00px;height:13.4px">
<div class="t" style="left:3.50px;top:1.89px;font-size:8.4px;color:#141414;-webkit-text-stroke:0.17px #141414;transform:scaleX(1.0600);transform-origin:0 0">-</div></div>
<div class="clip" style="left:547.50px;top:220.70px;width:12.50px;height:13.4px">
<div class="t" style="left:3.80px;top:1.89px;font-size:8.4px;color:#141414;-webkit-text-stroke:0.17px #141414;transform:scaleX(1.0000);transform-origin:0 0">M</div></div>
<div class="clip" style="left:560.50px;top:220.70px;width:58.60px;height:13.4px">
<div class="t" style="left:3.70px;top:1.89px;font-size:8.4px;color:#141414;-webkit-text-stroke:0.17px #141414;transform:scaleX(1.0800);transform-origin:0 0">09/03/1985</div></div>
<div class="clip" style="left:619.60px;top:220.70px;width:96.70px;height:13.4px">
<div class="t" style="left:3.70px;top:1.89px;font-size:8.4px;color:#141414;-webkit-text-stroke:0.17px #141414;transform:scaleX(1.0850);transform-origin:0 0">17/05/2022 12:14:31</div></div>
<div class="clip" style="left:22.30px;top:231.10px;width:136.70px;height:13.4px">
<div class="t" style="left:3.70px;top:1.89px;font-size:8.4px;color:#141414;-webkit-text-stroke:0.17px #141414;transform:scaleX(1.0200);transform-origin:0 0">ABEL WILLIANS</div></div>
<div class="clip" style="left:159.50px;top:231.10px;width:134.50px;height:13.4px">
<div class="t" style="left:2.50px;top:1.89px;font-size:8.4px;color:#141414;-webkit-text-stroke:0.17px #141414;transform:scaleX(1.0160);transform-origin:0 0">abel.willians@hotmail.com</div></div>
<div class="clip" style="left:294.50px;top:231.10px;width:71.30px;height:13.4px">
<div class="t" style="left:3.00px;top:1.89px;font-size:8.4px;color:#141414;-webkit-text-stroke:0.17px #141414;transform:scaleX(1.0750);transform-origin:0 0">(75) 3420-3131</div></div>
<div class="clip" style="left:366.30px;top:231.10px;width:72.00px;height:13.4px">
<div class="t" style="left:3.20px;top:1.89px;font-size:8.4px;color:#141414;-webkit-text-stroke:0.17px #141414;transform:scaleX(1.0750);transform-origin:0 0">(75) 9803-6040</div></div>
<div class="clip" style="left:438.80px;top:231.10px;width:57.70px;height:13.4px">
<div class="t" style="left:3.50px;top:1.89px;font-size:8.4px;color:#141414;-webkit-text-stroke:0.17px #141414;transform:scaleX(1.0500);transform-origin:0 0">Entre Rios</div></div>
<div class="clip" style="left:497.00px;top:231.10px;width:50.00px;height:13.4px">
<div class="t" style="left:3.50px;top:1.89px;font-size:8.4px;color:#141414;-webkit-text-stroke:0.17px #141414;transform:scaleX(1.0600);transform-origin:0 0">48180-000</div></div>
<div class="clip" style="left:547.50px;top:231.10px;width:12.50px;height:13.4px">
<div class="t" style="left:3.80px;top:1.89px;font-size:8.4px;color:#141414;-webkit-text-stroke:0.17px #141414;transform:scaleX(1.0000);transform-origin:0 0">M</div></div>
<div class="clip" style="left:560.50px;top:231.10px;width:58.60px;height:13.4px">
<div class="t" style="left:3.70px;top:1.89px;font-size:8.4px;color:#141414;-webkit-text-stroke:0.17px #141414;transform:scaleX(1.0800);transform-origin:0 0">06/09/1993</div></div>
<div class="clip" style="left:619.60px;top:231.10px;width:96.70px;height:13.4px">
<div class="t" style="left:3.70px;top:1.89px;font-size:8.4px;color:#141414;-webkit-text-stroke:0.17px #141414;transform:scaleX(1.0850);transform-origin:0 0">28/04/2022 11:18:05</div></div>
<div class="clip" style="left:22.30px;top:241.50px;width:136.70px;height:13.4px">
<div class="t" style="left:3.70px;top:1.89px;font-size:8.4px;color:#141414;-webkit-text-stroke:0.17px #141414;transform:scaleX(1.0200);transform-origin:0 0">Abelardo M. Leite</div></div>
<div class="clip" style="left:159.50px;top:241.50px;width:134.50px;height:13.4px">
<div class="t" style="left:2.50px;top:1.89px;font-size:8.4px;color:#141414;-webkit-text-stroke:0.17px #141414;transform:scaleX(1.0160);transform-origin:0 0">vitralmais@gmail.com</div></div>
<div class="clip" style="left:294.50px;top:241.50px;width:71.30px;height:13.4px">
<div class="t" style="left:3.00px;top:1.89px;font-size:8.4px;color:#141414;-webkit-text-stroke:0.17px #141414;transform:scaleX(1.0750);transform-origin:0 0">(61) 3356-1837</div></div>
<div class="clip" style="left:366.30px;top:241.50px;width:72.00px;height:13.4px">
<div class="t" style="left:3.20px;top:1.89px;font-size:8.4px;color:#141414;-webkit-text-stroke:0.17px #141414;transform:scaleX(1.0750);transform-origin:0 0">(61) 8619-2695</div></div>
<div class="clip" style="left:438.80px;top:241.50px;width:57.70px;height:13.4px">
<div class="t" style="left:3.50px;top:1.89px;font-size:8.4px;color:#141414;-webkit-text-stroke:0.17px #141414;transform:scaleX(1.0500);transform-origin:0 0">Taguatinga</div></div>
<div class="clip" style="left:497.00px;top:241.50px;width:50.00px;height:13.4px">
<div class="t" style="left:3.50px;top:1.89px;font-size:8.4px;color:#141414;-webkit-text-stroke:0.17px #141414;transform:scaleX(1.0600);transform-origin:0 0">71907-000</div></div>
<div class="clip" style="left:547.50px;top:241.50px;width:12.50px;height:13.4px">
<div class="t" style="left:3.80px;top:1.89px;font-size:8.4px;color:#141414;-webkit-text-stroke:0.17px #141414;transform:scaleX(1.0000);transform-origin:0 0">M</div></div>
<div class="clip" style="left:560.50px;top:241.50px;width:58.60px;height:13.4px">
<div class="t" style="left:3.70px;top:1.89px;font-size:8.4px;color:#141414;-webkit-text-stroke:0.17px #141414;transform:scaleX(1.0800);transform-origin:0 0">18/12/1976</div></div>
<div class="clip" style="left:619.60px;top:241.50px;width:96.70px;height:13.4px">
<div class="t" style="left:3.70px;top:1.89px;font-size:8.4px;color:#141414;-webkit-text-stroke:0.17px #141414;transform:scaleX(1.0850);transform-origin:0 0">04/07/2022 20:03:33</div></div>
<div class="clip" style="left:22.30px;top:251.90px;width:136.70px;height:13.4px">
<div class="t" style="left:3.70px;top:1.89px;font-size:8.4px;color:#141414;-webkit-text-stroke:0.17px #141414;transform:scaleX(1.0200);transform-origin:0 0">Abelardo Souza Damasceno</div></div>
<div class="clip" style="left:159.50px;top:251.90px;width:134.50px;height:13.4px">
<div class="t" style="left:2.50px;top:1.89px;font-size:8.4px;color:#141414;-webkit-text-stroke:0.17px #141414;transform:scaleX(1.0160);transform-origin:0 0">abelardo.breno@hotmail.com</div></div>
<div class="clip" style="left:294.50px;top:251.90px;width:71.30px;height:13.4px">
<div class="t" style="left:3.00px;top:1.89px;font-size:8.4px;color:#141414;-webkit-text-stroke:0.17px #141414;transform:scaleX(1.0750);transform-origin:0 0">(11) 5841-4678</div></div>
<div class="clip" style="left:366.30px;top:251.90px;width:72.00px;height:13.4px">
<div class="t" style="left:3.20px;top:1.89px;font-size:8.4px;color:#141414;-webkit-text-stroke:0.17px #141414;transform:scaleX(1.0750);transform-origin:0 0">(11) 8327-3591</div></div>
<div class="clip" style="left:438.80px;top:251.90px;width:57.70px;height:13.4px">
<div class="t" style="left:3.50px;top:1.89px;font-size:8.4px;color:#141414;-webkit-text-stroke:0.17px #141414;transform:scaleX(1.0500);transform-origin:0 0">São Paulo</div></div>
<div class="clip" style="left:497.00px;top:251.90px;width:50.00px;height:13.4px">
<div class="t" style="left:3.50px;top:1.89px;font-size:8.4px;color:#141414;-webkit-text-stroke:0.17px #141414;transform:scaleX(1.0600);transform-origin:0 0">05754-040</div></div>
<div class="clip" style="left:547.50px;top:251.90px;width:12.50px;height:13.4px">
<div class="t" style="left:3.80px;top:1.89px;font-size:8.4px;color:#141414;-webkit-text-stroke:0.17px #141414;transform:scaleX(1.0000);transform-origin:0 0">M</div></div>
<div class="clip" style="left:560.50px;top:251.90px;width:58.60px;height:13.4px">
<div class="t" style="left:3.70px;top:1.89px;font-size:8.4px;color:#141414;-webkit-text-stroke:0.17px #141414;transform:scaleX(1.0800);transform-origin:0 0">15/02/1966</div></div>
<div class="clip" style="left:619.60px;top:251.90px;width:96.70px;height:13.4px">
<div class="t" style="left:3.70px;top:1.89px;font-size:8.4px;color:#141414;-webkit-text-stroke:0.17px #141414;transform:scaleX(1.0850);transform-origin:0 0">10/03/2022 07:01:09</div></div>
<div class="clip" style="left:22.30px;top:262.30px;width:136.70px;height:13.4px">
<div class="t" style="left:3.70px;top:1.89px;font-size:8.4px;color:#141414;-webkit-text-stroke:0.17px #141414;transform:scaleX(1.0200);transform-origin:0 0">abenailderosa de lima sampaio</div></div>
<div class="clip" style="left:159.50px;top:262.30px;width:134.50px;height:13.4px">
<div class="t" style="left:2.50px;top:1.89px;font-size:8.4px;color:#141414;-webkit-text-stroke:0.17px #141414;transform:scaleX(1.0160);transform-origin:0 0">aaarlima@hotmail.com</div></div>
<div class="clip" style="left:294.50px;top:262.30px;width:71.30px;height:13.4px">
<div class="t" style="left:3.00px;top:1.89px;font-size:8.4px;color:#141414;-webkit-text-stroke:0.17px #141414;transform:scaleX(1.0750);transform-origin:0 0">(11) 4782-5356</div></div>
<div class="clip" style="left:366.30px;top:262.30px;width:72.00px;height:13.4px">
<div class="t" style="left:3.20px;top:1.89px;font-size:8.4px;color:#141414;-webkit-text-stroke:0.17px #141414;transform:scaleX(1.0750);transform-origin:0 0">(11) 6158-0613</div></div>
<div class="clip" style="left:438.80px;top:262.30px;width:57.70px;height:13.4px">
<div class="t" style="left:3.50px;top:1.89px;font-size:8.4px;color:#141414;-webkit-text-stroke:0.17px #141414;transform:scaleX(1.0500);transform-origin:0 0">Embu</div></div>
<div class="clip" style="left:497.00px;top:262.30px;width:50.00px;height:13.4px">
<div class="t" style="left:3.50px;top:1.89px;font-size:8.4px;color:#141414;-webkit-text-stroke:0.17px #141414;transform:scaleX(1.0600);transform-origin:0 0">06826-230</div></div>
<div class="clip" style="left:547.50px;top:262.30px;width:12.50px;height:13.4px">
<div class="t" style="left:3.80px;top:1.89px;font-size:8.4px;color:#141414;-webkit-text-stroke:0.17px #141414;transform:scaleX(1.0000);transform-origin:0 0">F</div></div>
<div class="clip" style="left:560.50px;top:262.30px;width:58.60px;height:13.4px">
<div class="t" style="left:3.70px;top:1.89px;font-size:8.4px;color:#141414;-webkit-text-stroke:0.17px #141414;transform:scaleX(1.0800);transform-origin:0 0">24/12/1964</div></div>
<div class="clip" style="left:619.60px;top:262.30px;width:96.70px;height:13.4px">
<div class="t" style="left:3.70px;top:1.89px;font-size:8.4px;color:#141414;-webkit-text-stroke:0.17px #141414;transform:scaleX(1.0850);transform-origin:0 0">18/10/2022 22:24:32</div></div>
<div class="clip" style="left:22.30px;top:272.70px;width:136.70px;height:13.4px">
<div class="t" style="left:3.70px;top:1.89px;font-size:8.4px;color:#141414;-webkit-text-stroke:0.17px #141414;transform:scaleX(1.0200);transform-origin:0 0">Abgail Mendes de Sousa</div></div>
<div class="clip" style="left:159.50px;top:272.70px;width:134.50px;height:13.4px">
<div class="t" style="left:2.50px;top:1.89px;font-size:8.4px;color:#141414;-webkit-text-stroke:0.17px #141414;transform:scaleX(1.0160);transform-origin:0 0">abgalicious@hotmail.com</div></div>
<div class="clip" style="left:294.50px;top:272.70px;width:71.30px;height:13.4px">
<div class="t" style="left:3.00px;top:1.89px;font-size:8.4px;color:#141414;-webkit-text-stroke:0.17px #141414;transform:scaleX(1.0750);transform-origin:0 0">(61) 3877-7876</div></div>
<div class="clip" style="left:366.30px;top:272.70px;width:72.00px;height:13.4px">
<div class="t" style="left:3.20px;top:1.89px;font-size:8.4px;color:#141414;-webkit-text-stroke:0.17px #141414;transform:scaleX(1.0750);transform-origin:0 0">(61) 9296-9783</div></div>
<div class="clip" style="left:438.80px;top:272.70px;width:57.70px;height:13.4px">
<div class="t" style="left:3.50px;top:1.89px;font-size:8.4px;color:#141414;-webkit-text-stroke:0.17px #141414;transform:scaleX(1.0500);transform-origin:0 0">Taguatinga</div></div>
<div class="clip" style="left:497.00px;top:272.70px;width:50.00px;height:13.4px">
<div class="t" style="left:3.50px;top:1.89px;font-size:8.4px;color:#141414;-webkit-text-stroke:0.17px #141414;transform:scaleX(1.0600);transform-origin:0 0">72025-640</div></div>
<div class="clip" style="left:547.50px;top:272.70px;width:12.50px;height:13.4px">
<div class="t" style="left:3.80px;top:1.89px;font-size:8.4px;color:#141414;-webkit-text-stroke:0.17px #141414;transform:scaleX(1.0000);transform-origin:0 0">F</div></div>
<div class="clip" style="left:560.50px;top:272.70px;width:58.60px;height:13.4px">
<div class="t" style="left:3.70px;top:1.89px;font-size:8.4px;color:#141414;-webkit-text-stroke:0.17px #141414;transform:scaleX(1.0800);transform-origin:0 0">25/01/1973</div></div>
<div class="clip" style="left:619.60px;top:272.70px;width:96.70px;height:13.4px">
<div class="t" style="left:3.70px;top:1.89px;font-size:8.4px;color:#141414;-webkit-text-stroke:0.17px #141414;transform:scaleX(1.0850);transform-origin:0 0">11/08/2011 14:51:05</div></div>
<div class="clip" style="left:22.30px;top:283.10px;width:136.70px;height:13.4px">
<div class="t" style="left:3.70px;top:1.89px;font-size:8.4px;color:#141414;-webkit-text-stroke:0.17px #141414;transform:scaleX(1.0200);transform-origin:0 0">Abia Luiza</div></div>
<div class="clip" style="left:159.50px;top:283.10px;width:134.50px;height:13.4px">
<div class="t" style="left:2.50px;top:1.89px;font-size:8.4px;color:#141414;-webkit-text-stroke:0.17px #141414;transform:scaleX(1.0160);transform-origin:0 0">a.luizas@hotmail.com</div></div>
<div class="clip" style="left:294.50px;top:283.10px;width:71.30px;height:13.4px">
<div class="t" style="left:3.00px;top:1.89px;font-size:8.4px;color:#141414;-webkit-text-stroke:0.17px #141414;transform:scaleX(1.0750);transform-origin:0 0">(19) 3385-4356</div></div>
<div class="clip" style="left:366.30px;top:283.10px;width:72.00px;height:13.4px">
<div class="t" style="left:3.20px;top:1.89px;font-size:8.4px;color:#141414;-webkit-text-stroke:0.17px #141414;transform:scaleX(1.0750);transform-origin:0 0">(19) 9376-7567</div></div>
<div class="clip" style="left:438.80px;top:283.10px;width:57.70px;height:13.4px">
<div class="t" style="left:3.50px;top:1.89px;font-size:8.4px;color:#141414;-webkit-text-stroke:0.17px #141414;transform:scaleX(1.0500);transform-origin:0 0">Campinas</div></div>
<div class="clip" style="left:497.00px;top:283.10px;width:50.00px;height:13.4px">
<div class="t" style="left:3.50px;top:1.89px;font-size:8.4px;color:#141414;-webkit-text-stroke:0.17px #141414;transform:scaleX(1.0600);transform-origin:0 0">13067-250</div></div>
<div class="clip" style="left:547.50px;top:283.10px;width:12.50px;height:13.4px">
<div class="t" style="left:3.80px;top:1.89px;font-size:8.4px;color:#141414;-webkit-text-stroke:0.17px #141414;transform:scaleX(1.0000);transform-origin:0 0">F</div></div>
<div class="clip" style="left:560.50px;top:283.10px;width:58.60px;height:13.4px">
<div class="t" style="left:3.70px;top:1.89px;font-size:8.4px;color:#141414;-webkit-text-stroke:0.17px #141414;transform:scaleX(1.0800);transform-origin:0 0">09/05/1985</div></div>
<div class="clip" style="left:619.60px;top:283.10px;width:96.70px;height:13.4px">
<div class="t" style="left:3.70px;top:1.89px;font-size:8.4px;color:#141414;-webkit-text-stroke:0.17px #141414;transform:scaleX(1.0850);transform-origin:0 0">16/01/2022 10:04:05</div></div>
<div class="clip" style="left:22.30px;top:293.50px;width:136.70px;height:13.4px">
<div class="t" style="left:3.70px;top:1.89px;font-size:8.4px;color:#141414;-webkit-text-stroke:0.17px #141414;transform:scaleX(1.0200);transform-origin:0 0">abigail tito da silva reis</div></div>
<div class="clip" style="left:159.50px;top:293.50px;width:134.50px;height:13.4px">
<div class="t" style="left:2.50px;top:1.89px;font-size:8.4px;color:#141414;-webkit-text-stroke:0.17px #141414;transform:scaleX(1.0160);transform-origin:0 0">atsr_bras@rocketmail.com</div></div>
<div class="clip" style="left:294.50px;top:293.50px;width:71.30px;height:13.4px">
<div class="t" style="left:3.00px;top:1.89px;font-size:8.4px;color:#141414;-webkit-text-stroke:0.17px #141414;transform:scaleX(1.0750);transform-origin:0 0">(11) 3228-6027</div></div>
<div class="clip" style="left:366.30px;top:293.50px;width:72.00px;height:13.4px">
<div class="t" style="left:3.20px;top:1.89px;font-size:8.4px;color:#141414;-webkit-text-stroke:0.17px #141414;transform:scaleX(1.0750);transform-origin:0 0">(11) 8967-9759</div></div>
<div class="clip" style="left:497.00px;top:293.50px;width:50.00px;height:13.4px">
<div class="t" style="left:3.50px;top:1.89px;font-size:8.4px;color:#141414;-webkit-text-stroke:0.17px #141414;transform:scaleX(1.0600);transform-origin:0 0">-</div></div>
<div class="clip" style="left:547.50px;top:293.50px;width:12.50px;height:13.4px">
<div class="t" style="left:3.80px;top:1.89px;font-size:8.4px;color:#141414;-webkit-text-stroke:0.17px #141414;transform:scaleX(1.0000);transform-origin:0 0">F</div></div>
<div class="clip" style="left:560.50px;top:293.50px;width:58.60px;height:13.4px">
<div class="t" style="left:3.70px;top:1.89px;font-size:8.4px;color:#141414;-webkit-text-stroke:0.17px #141414;transform:scaleX(1.0800);transform-origin:0 0">01/01/1971</div></div>
<div class="clip" style="left:619.60px;top:293.50px;width:96.70px;height:13.4px">
<div class="t" style="left:3.70px;top:1.89px;font-size:8.4px;color:#141414;-webkit-text-stroke:0.17px #141414;transform:scaleX(1.0850);transform-origin:0 0">12/06/2022 08:36:30</div></div>
<div class="clip" style="left:22.30px;top:303.90px;width:136.70px;height:13.4px">
<div class="t" style="left:3.70px;top:1.89px;font-size:8.4px;color:#141414;-webkit-text-stroke:0.17px #141414;transform:scaleX(1.0200);transform-origin:0 0">Abiham Elias de Moraes</div></div>
<div class="clip" style="left:159.50px;top:303.90px;width:134.50px;height:13.4px">
<div class="t" style="left:2.50px;top:1.89px;font-size:8.4px;color:#141414;-webkit-text-stroke:0.17px #141414;transform:scaleX(1.0160);transform-origin:0 0">abihammoraes@hotmail.com</div></div>
<div class="clip" style="left:294.50px;top:303.90px;width:71.30px;height:13.4px">
<div class="t" style="left:3.00px;top:1.89px;font-size:8.4px;color:#141414;-webkit-text-stroke:0.17px #141414;transform:scaleX(1.0750);transform-origin:0 0">(37) 3286-1296</div></div>
<div class="clip" style="left:366.30px;top:303.90px;width:72.00px;height:13.4px">
<div class="t" style="left:3.20px;top:1.89px;font-size:8.4px;color:#141414;-webkit-text-stroke:0.17px #141414;transform:scaleX(1.0750);transform-origin:0 0">(37) 9122-4915</div></div>
<div class="clip" style="left:438.80px;top:303.90px;width:57.70px;height:13.4px">
<div class="t" style="left:3.50px;top:1.89px;font-size:8.4px;color:#141414;-webkit-text-stroke:0.17px #141414;transform:scaleX(1.0500);transform-origin:0 0">São Sebastião</div></div>
<div class="clip" style="left:497.00px;top:303.90px;width:50.00px;height:13.4px">
<div class="t" style="left:3.50px;top:1.89px;font-size:8.4px;color:#141414;-webkit-text-stroke:0.17px #141414;transform:scaleX(1.0600);transform-origin:0 0">35506-000</div></div>
<div class="clip" style="left:547.50px;top:303.90px;width:12.50px;height:13.4px">
<div class="t" style="left:3.80px;top:1.89px;font-size:8.4px;color:#141414;-webkit-text-stroke:0.17px #141414;transform:scaleX(1.0000);transform-origin:0 0">M</div></div>
<div class="clip" style="left:560.50px;top:303.90px;width:58.60px;height:13.4px">
<div class="t" style="left:3.70px;top:1.89px;font-size:8.4px;color:#141414;-webkit-text-stroke:0.17px #141414;transform:scaleX(1.0800);transform-origin:0 0">22/02/1984</div></div>
<div class="clip" style="left:619.60px;top:303.90px;width:96.70px;height:13.4px">
<div class="t" style="left:3.70px;top:1.89px;font-size:8.4px;color:#141414;-webkit-text-stroke:0.17px #141414;transform:scaleX(1.0850);transform-origin:0 0">18/09/2022 12:49:13</div></div>
<div class="clip" style="left:22.30px;top:314.30px;width:136.70px;height:13.4px">
<div class="t" style="left:3.70px;top:1.89px;font-size:8.4px;color:#141414;-webkit-text-stroke:0.17px #141414;transform:scaleX(1.0200);transform-origin:0 0">Abimael Matias Teixeira</div></div>
<div class="clip" style="left:159.50px;top:314.30px;width:134.50px;height:13.4px">
<div class="t" style="left:2.50px;top:1.89px;font-size:8.4px;color:#141414;-webkit-text-stroke:0.17px #141414;transform:scaleX(1.0160);transform-origin:0 0">amt@cristanobrasil.com</div></div>
<div class="clip" style="left:294.50px;top:314.30px;width:71.30px;height:13.4px">
<div class="t" style="left:3.00px;top:1.89px;font-size:8.4px;color:#141414;-webkit-text-stroke:0.17px #141414;transform:scaleX(1.0750);transform-origin:0 0">(34) 3428-3190</div></div>
<div class="clip" style="left:366.30px;top:314.30px;width:72.00px;height:13.4px">
<div class="t" style="left:3.20px;top:1.89px;font-size:8.4px;color:#141414;-webkit-text-stroke:0.17px #141414;transform:scaleX(1.0750);transform-origin:0 0">(34) 9186-2197</div></div>
<div class="clip" style="left:438.80px;top:314.30px;width:57.70px;height:13.4px">
<div class="t" style="left:3.50px;top:1.89px;font-size:8.4px;color:#141414;-webkit-text-stroke:0.17px #141414;transform:scaleX(1.0500);transform-origin:0 0">Fronteira</div></div>
<div class="clip" style="left:497.00px;top:314.30px;width:50.00px;height:13.4px">
<div class="t" style="left:3.50px;top:1.89px;font-size:8.4px;color:#141414;-webkit-text-stroke:0.17px #141414;transform:scaleX(1.0600);transform-origin:0 0">38230-000</div></div>
<div class="clip" style="left:547.50px;top:314.30px;width:12.50px;height:13.4px">
<div class="t" style="left:3.80px;top:1.89px;font-size:8.4px;color:#141414;-webkit-text-stroke:0.17px #141414;transform:scaleX(1.0000);transform-origin:0 0">M</div></div>
<div class="clip" style="left:560.50px;top:314.30px;width:58.60px;height:13.4px">
<div class="t" style="left:3.70px;top:1.89px;font-size:8.4px;color:#141414;-webkit-text-stroke:0.17px #141414;transform:scaleX(1.0800);transform-origin:0 0">08/02/1988</div></div>
<div class="clip" style="left:619.60px;top:314.30px;width:96.70px;height:13.4px">
<div class="t" style="left:3.70px;top:1.89px;font-size:8.4px;color:#141414;-webkit-text-stroke:0.17px #141414;transform:scaleX(1.0850);transform-origin:0 0">22/09/2022 12:03:09</div></div>
<div class="clip" style="left:22.30px;top:324.70px;width:136.70px;height:13.4px">
<div class="t" style="left:3.70px;top:1.89px;font-size:8.4px;color:#141414;-webkit-text-stroke:0.17px #141414;transform:scaleX(1.0200);transform-origin:0 0">Abner de Azevedo</div></div>
<div class="clip" style="left:159.50px;top:324.70px;width:134.50px;height:13.4px">
<div class="t" style="left:2.50px;top:1.89px;font-size:8.4px;color:#141414;-webkit-text-stroke:0.17px #141414;transform:scaleX(1.0160);transform-origin:0 0">abnerazevedo@hotmail.com</div></div>
<div class="clip" style="left:294.50px;top:324.70px;width:71.30px;height:13.4px">
<div class="t" style="left:3.00px;top:1.89px;font-size:8.4px;color:#141414;-webkit-text-stroke:0.17px #141414;transform:scaleX(1.0750);transform-origin:0 0">(44) 3645-1476</div></div>
<div class="clip" style="left:366.30px;top:324.70px;width:72.00px;height:13.4px">
<div class="t" style="left:3.20px;top:1.89px;font-size:8.4px;color:#141414;-webkit-text-stroke:0.17px #141414;transform:scaleX(1.0750);transform-origin:0 0">(44) 9927-6174</div></div>
<div class="clip" style="left:438.80px;top:324.70px;width:57.70px;height:13.4px">
<div class="t" style="left:3.50px;top:1.89px;font-size:8.4px;color:#141414;-webkit-text-stroke:0.17px #141414;transform:scaleX(1.0500);transform-origin:0 0">Terra Roxa</div></div>
<div class="clip" style="left:497.00px;top:324.70px;width:50.00px;height:13.4px">
<div class="t" style="left:3.50px;top:1.89px;font-size:8.4px;color:#141414;-webkit-text-stroke:0.17px #141414;transform:scaleX(1.0600);transform-origin:0 0">85990-000</div></div>
<div class="clip" style="left:547.50px;top:324.70px;width:12.50px;height:13.4px">
<div class="t" style="left:3.80px;top:1.89px;font-size:8.4px;color:#141414;-webkit-text-stroke:0.17px #141414;transform:scaleX(1.0000);transform-origin:0 0">M</div></div>
<div class="clip" style="left:560.50px;top:324.70px;width:58.60px;height:13.4px">
<div class="t" style="left:3.70px;top:1.89px;font-size:8.4px;color:#141414;-webkit-text-stroke:0.17px #141414;transform:scaleX(1.0800);transform-origin:0 0">23/10/1988</div></div>
<div class="clip" style="left:619.60px;top:324.70px;width:96.70px;height:13.4px">
<div class="t" style="left:3.70px;top:1.89px;font-size:8.4px;color:#141414;-webkit-text-stroke:0.17px #141414;transform:scaleX(1.0850);transform-origin:0 0">12/10/2022 12:45:27</div></div>
<div class="clip" style="left:22.30px;top:335.10px;width:136.70px;height:13.4px">
<div class="t" style="left:3.70px;top:1.89px;font-size:8.4px;color:#141414;-webkit-text-stroke:0.17px #141414;transform:scaleX(1.0200);transform-origin:0 0">abner ranieri marquezi</div></div>
<div class="clip" style="left:159.50px;top:335.10px;width:134.50px;height:13.4px">
<div class="t" style="left:2.50px;top:1.89px;font-size:8.4px;color:#141414;-webkit-text-stroke:0.17px #141414;transform:scaleX(1.0160);transform-origin:0 0">abneranieri@hotmail.com</div></div>
<div class="clip" style="left:294.50px;top:335.10px;width:71.30px;height:13.4px">
<div class="t" style="left:3.00px;top:1.89px;font-size:8.4px;color:#141414;-webkit-text-stroke:0.17px #141414;transform:scaleX(1.0750);transform-origin:0 0">(19) 3028-0069</div></div>
<div class="clip" style="left:366.30px;top:335.10px;width:72.00px;height:13.4px">
<div class="t" style="left:3.20px;top:1.89px;font-size:8.4px;color:#141414;-webkit-text-stroke:0.17px #141414;transform:scaleX(1.0750);transform-origin:0 0">(19) 8874-1235</div></div>
<div class="clip" style="left:438.80px;top:335.10px;width:57.70px;height:13.4px">
<div class="t" style="left:3.50px;top:1.89px;font-size:8.4px;color:#141414;-webkit-text-stroke:0.17px #141414;transform:scaleX(1.0500);transform-origin:0 0">Campinas</div></div>
<div class="clip" style="left:497.00px;top:335.10px;width:50.00px;height:13.4px">
<div class="t" style="left:3.50px;top:1.89px;font-size:8.4px;color:#141414;-webkit-text-stroke:0.17px #141414;transform:scaleX(1.0600);transform-origin:0 0">13051-110</div></div>
<div class="clip" style="left:547.50px;top:335.10px;width:12.50px;height:13.4px">
<div class="t" style="left:3.80px;top:1.89px;font-size:8.4px;color:#141414;-webkit-text-stroke:0.17px #141414;transform:scaleX(1.0000);transform-origin:0 0">M</div></div>
<div class="clip" style="left:560.50px;top:335.10px;width:58.60px;height:13.4px">
<div class="t" style="left:3.70px;top:1.89px;font-size:8.4px;color:#141414;-webkit-text-stroke:0.17px #141414;transform:scaleX(1.0800);transform-origin:0 0">24/08/1990</div></div>
<div class="clip" style="left:619.60px;top:335.10px;width:96.70px;height:13.4px">
<div class="t" style="left:3.70px;top:1.89px;font-size:8.4px;color:#141414;-webkit-text-stroke:0.17px #141414;transform:scaleX(1.0850);transform-origin:0 0">28/04/2022 15:59:34</div></div>
<div class="clip" style="left:22.30px;top:345.50px;width:136.70px;height:13.4px">
<div class="t" style="left:3.70px;top:1.89px;font-size:8.4px;color:#141414;-webkit-text-stroke:0.17px #141414;transform:scaleX(1.0200);transform-origin:0 0">Abner Rocha</div></div>
<div class="clip" style="left:159.50px;top:345.50px;width:134.50px;height:13.4px">
<div class="t" style="left:2.50px;top:1.89px;font-size:8.4px;color:#141414;-webkit-text-stroke:0.17px #141414;transform:scaleX(1.0160);transform-origin:0 0">defas1@hotmail.com</div></div>
<div class="clip" style="left:294.50px;top:345.50px;width:71.30px;height:13.4px">
<div class="t" style="left:3.00px;top:1.89px;font-size:8.4px;color:#141414;-webkit-text-stroke:0.17px #141414;transform:scaleX(1.0750);transform-origin:0 0">(11) 0000-0000</div></div>
<div class="clip" style="left:366.30px;top:345.50px;width:72.00px;height:13.4px">
<div class="t" style="left:3.20px;top:1.89px;font-size:8.4px;color:#141414;-webkit-text-stroke:0.17px #141414;transform:scaleX(1.0750);transform-origin:0 0">(11) 7102-4303</div></div>
<div class="clip" style="left:497.00px;top:345.50px;width:50.00px;height:13.4px">
<div class="t" style="left:3.50px;top:1.89px;font-size:8.4px;color:#141414;-webkit-text-stroke:0.17px #141414;transform:scaleX(1.0600);transform-origin:0 0">-</div></div>
<div class="clip" style="left:547.50px;top:345.50px;width:12.50px;height:13.4px">
<div class="t" style="left:3.80px;top:1.89px;font-size:8.4px;color:#141414;-webkit-text-stroke:0.17px #141414;transform:scaleX(1.0000);transform-origin:0 0">M</div></div>
<div class="clip" style="left:560.50px;top:345.50px;width:58.60px;height:13.4px">
<div class="t" style="left:3.70px;top:1.89px;font-size:8.4px;color:#141414;-webkit-text-stroke:0.17px #141414;transform:scaleX(1.0800);transform-origin:0 0">01/02/1989</div></div>
<div class="clip" style="left:619.60px;top:345.50px;width:96.70px;height:13.4px">
<div class="t" style="left:3.70px;top:1.89px;font-size:8.4px;color:#141414;-webkit-text-stroke:0.17px #141414;transform:scaleX(1.0850);transform-origin:0 0">23/05/2022 11:00:09</div></div>
<div class="clip" style="left:22.30px;top:355.90px;width:136.70px;height:13.4px">
<div class="t" style="left:3.70px;top:1.89px;font-size:8.4px;color:#141414;-webkit-text-stroke:0.17px #141414;transform:scaleX(1.0200);transform-origin:0 0">Abner Santos Lima de Brito</div></div>
<div class="clip" style="left:159.50px;top:355.90px;width:134.50px;height:13.4px">
<div class="t" style="left:2.50px;top:1.89px;font-size:8.4px;color:#141414;-webkit-text-stroke:0.17px #141414;transform:scaleX(1.0160);transform-origin:0 0">abnersantosbrito@gmail.com</div></div>
<div class="clip" style="left:294.50px;top:355.90px;width:71.30px;height:13.4px">
<div class="t" style="left:3.00px;top:1.89px;font-size:8.4px;color:#141414;-webkit-text-stroke:0.17px #141414;transform:scaleX(1.0750);transform-origin:0 0">(85) 3082-7760</div></div>
<div class="clip" style="left:366.30px;top:355.90px;width:72.00px;height:13.4px">
<div class="t" style="left:3.20px;top:1.89px;font-size:8.4px;color:#141414;-webkit-text-stroke:0.17px #141414;transform:scaleX(1.0750);transform-origin:0 0">(85) 8699-7623</div></div>
<div class="clip" style="left:438.80px;top:355.90px;width:57.70px;height:13.4px">
<div class="t" style="left:3.50px;top:1.89px;font-size:8.4px;color:#141414;-webkit-text-stroke:0.17px #141414;transform:scaleX(1.0500);transform-origin:0 0">Fortaleza</div></div>
<div class="clip" style="left:497.00px;top:355.90px;width:50.00px;height:13.4px">
<div class="t" style="left:3.50px;top:1.89px;font-size:8.4px;color:#141414;-webkit-text-stroke:0.17px #141414;transform:scaleX(1.0600);transform-origin:0 0">60821-585</div></div>
<div class="clip" style="left:547.50px;top:355.90px;width:12.50px;height:13.4px">
<div class="t" style="left:3.80px;top:1.89px;font-size:8.4px;color:#141414;-webkit-text-stroke:0.17px #141414;transform:scaleX(1.0000);transform-origin:0 0">F</div></div>
<div class="clip" style="left:560.50px;top:355.90px;width:58.60px;height:13.4px">
<div class="t" style="left:3.70px;top:1.89px;font-size:8.4px;color:#141414;-webkit-text-stroke:0.17px #141414;transform:scaleX(1.0800);transform-origin:0 0">03/03/1980</div></div>
<div class="clip" style="left:619.60px;top:355.90px;width:96.70px;height:13.4px">
<div class="t" style="left:3.70px;top:1.89px;font-size:8.4px;color:#141414;-webkit-text-stroke:0.17px #141414;transform:scaleX(1.0850);transform-origin:0 0">10/05/2022 10:10:10</div></div>
<div class="clip" style="left:22.30px;top:366.30px;width:136.70px;height:13.4px">
<div class="t" style="left:3.70px;top:1.89px;font-size:8.4px;color:#141414;-webkit-text-stroke:0.17px #141414;transform:scaleX(1.0200);transform-origin:0 0">Abraão Carneiro</div></div>
<div class="clip" style="left:159.50px;top:366.30px;width:134.50px;height:13.4px">
<div class="t" style="left:2.50px;top:1.89px;font-size:8.4px;color:#141414;-webkit-text-stroke:0.17px #141414;transform:scaleX(1.0160);transform-origin:0 0">carneiroab@gmail.com</div></div>
<div class="clip" style="left:294.50px;top:366.30px;width:71.30px;height:13.4px">
<div class="t" style="left:3.00px;top:1.89px;font-size:8.4px;color:#141414;-webkit-text-stroke:0.17px #141414;transform:scaleX(1.0750);transform-origin:0 0">(15) 3213-2900</div></div>
<div class="clip" style="left:366.30px;top:366.30px;width:72.00px;height:13.4px">
<div class="t" style="left:3.20px;top:1.89px;font-size:8.4px;color:#141414;-webkit-text-stroke:0.17px #141414;transform:scaleX(1.0750);transform-origin:0 0">(15) 9102-3231</div></div>
<div class="clip" style="left:438.80px;top:366.30px;width:57.70px;height:13.4px">
<div class="t" style="left:3.50px;top:1.89px;font-size:8.4px;color:#141414;-webkit-text-stroke:0.17px #141414;transform:scaleX(1.0500);transform-origin:0 0">Sorocaba</div></div>
<div class="clip" style="left:497.00px;top:366.30px;width:50.00px;height:13.4px">
<div class="t" style="left:3.50px;top:1.89px;font-size:8.4px;color:#141414;-webkit-text-stroke:0.17px #141414;transform:scaleX(1.0600);transform-origin:0 0">18000-000</div></div>
<div class="clip" style="left:547.50px;top:366.30px;width:12.50px;height:13.4px">
<div class="t" style="left:3.80px;top:1.89px;font-size:8.4px;color:#141414;-webkit-text-stroke:0.17px #141414;transform:scaleX(1.0000);transform-origin:0 0">M</div></div>
<div class="clip" style="left:560.50px;top:366.30px;width:58.60px;height:13.4px">
<div class="t" style="left:3.70px;top:1.89px;font-size:8.4px;color:#141414;-webkit-text-stroke:0.17px #141414;transform:scaleX(1.0800);transform-origin:0 0">01/01/1970</div></div>
<div class="clip" style="left:619.60px;top:366.30px;width:96.70px;height:13.4px">
<div class="t" style="left:3.70px;top:1.89px;font-size:8.4px;color:#141414;-webkit-text-stroke:0.17px #141414;transform:scaleX(1.0850);transform-origin:0 0">01/01/2022 10:10:10</div></div>
<div class="clip" style="left:22.30px;top:376.70px;width:136.70px;height:13.4px">
<div class="t" style="left:3.70px;top:1.89px;font-size:8.4px;color:#141414;-webkit-text-stroke:0.17px #141414;transform:scaleX(1.0200);transform-origin:0 0">abraão maria silveira</div></div>
<div class="clip" style="left:159.50px;top:376.70px;width:134.50px;height:13.4px">
<div class="t" style="left:2.50px;top:1.89px;font-size:8.4px;color:#141414;-webkit-text-stroke:0.17px #141414;transform:scaleX(1.0160);transform-origin:0 0">abraao.silveira@hotmail.com</div></div>
<div class="clip" style="left:294.50px;top:376.70px;width:71.30px;height:13.4px">
<div class="t" style="left:3.00px;top:1.89px;font-size:8.4px;color:#141414;-webkit-text-stroke:0.17px #141414;transform:scaleX(1.0750);transform-origin:0 0">(31) 3657-9624</div></div>
<div class="clip" style="left:366.30px;top:376.70px;width:72.00px;height:13.4px">
<div class="t" style="left:3.20px;top:1.89px;font-size:8.4px;color:#141414;-webkit-text-stroke:0.17px #141414;transform:scaleX(1.0750);transform-origin:0 0">(31) 9888-0541</div></div>
<div class="clip" style="left:438.80px;top:376.70px;width:57.70px;height:13.4px">
<div class="t" style="left:3.50px;top:1.89px;font-size:8.4px;color:#141414;-webkit-text-stroke:0.17px #141414;transform:scaleX(1.0500);transform-origin:0 0">Poços</div></div>
<div class="clip" style="left:497.00px;top:376.70px;width:50.00px;height:13.4px">
<div class="t" style="left:3.50px;top:1.89px;font-size:8.4px;color:#141414;-webkit-text-stroke:0.17px #141414;transform:scaleX(1.0600);transform-origin:0 0">30000-000</div></div>
<div class="clip" style="left:547.50px;top:376.70px;width:12.50px;height:13.4px">
<div class="t" style="left:3.80px;top:1.89px;font-size:8.4px;color:#141414;-webkit-text-stroke:0.17px #141414;transform:scaleX(1.0000);transform-origin:0 0">M</div></div>
<div class="clip" style="left:560.50px;top:376.70px;width:58.60px;height:13.4px">
<div class="t" style="left:3.70px;top:1.89px;font-size:8.4px;color:#141414;-webkit-text-stroke:0.17px #141414;transform:scaleX(1.0800);transform-origin:0 0">01/01/1970</div></div>
<div class="clip" style="left:619.60px;top:376.70px;width:96.70px;height:13.4px">
<div class="t" style="left:3.70px;top:1.89px;font-size:8.4px;color:#141414;-webkit-text-stroke:0.17px #141414;transform:scaleX(1.0850);transform-origin:0 0">01/01/2022 10:10:10</div></div>
<div class="clip" style="left:22.30px;top:387.10px;width:136.70px;height:13.4px">
<div class="t" style="left:3.70px;top:1.89px;font-size:8.4px;color:#141414;-webkit-text-stroke:0.17px #141414;transform:scaleX(1.0200);transform-origin:0 0">Abraão Silva</div></div>
<div class="clip" style="left:159.50px;top:387.10px;width:134.50px;height:13.4px">
<div class="t" style="left:2.50px;top:1.89px;font-size:8.4px;color:#141414;-webkit-text-stroke:0.17px #141414;transform:scaleX(1.0160);transform-origin:0 0">abraao28sg@hotmail.com</div></div>
<div class="clip" style="left:294.50px;top:387.10px;width:71.30px;height:13.4px">
<div class="t" style="left:3.00px;top:1.89px;font-size:8.4px;color:#141414;-webkit-text-stroke:0.17px #141414;transform:scaleX(1.0750);transform-origin:0 0">(21) 2628-4518</div></div>
<div class="clip" style="left:366.30px;top:387.10px;width:72.00px;height:13.4px">
<div class="t" style="left:3.20px;top:1.89px;font-size:8.4px;color:#141414;-webkit-text-stroke:0.17px #141414;transform:scaleX(1.0750);transform-origin:0 0">(21) 8416-3322</div></div>
<div class="clip" style="left:438.80px;top:387.10px;width:57.70px;height:13.4px">
<div class="t" style="left:3.50px;top:1.89px;font-size:8.4px;color:#141414;-webkit-text-stroke:0.17px #141414;transform:scaleX(1.0500);transform-origin:0 0">Rio</div></div>
<div class="clip" style="left:497.00px;top:387.10px;width:50.00px;height:13.4px">
<div class="t" style="left:3.50px;top:1.89px;font-size:8.4px;color:#141414;-webkit-text-stroke:0.17px #141414;transform:scaleX(1.0600);transform-origin:0 0">20000-000</div></div>
<div class="clip" style="left:547.50px;top:387.10px;width:12.50px;height:13.4px">
<div class="t" style="left:3.80px;top:1.89px;font-size:8.4px;color:#141414;-webkit-text-stroke:0.17px #141414;transform:scaleX(1.0000);transform-origin:0 0">M</div></div>
<div class="clip" style="left:560.50px;top:387.10px;width:58.60px;height:13.4px">
<div class="t" style="left:3.70px;top:1.89px;font-size:8.4px;color:#141414;-webkit-text-stroke:0.17px #141414;transform:scaleX(1.0800);transform-origin:0 0">01/01/1970</div></div>
<div class="clip" style="left:619.60px;top:387.10px;width:96.70px;height:13.4px">
<div class="t" style="left:3.70px;top:1.89px;font-size:8.4px;color:#141414;-webkit-text-stroke:0.17px #141414;transform:scaleX(1.0850);transform-origin:0 0">01/01/2022 10:10:10</div></div>
<div class="clip" style="left:22.30px;top:397.50px;width:136.70px;height:13.4px">
<div class="t" style="left:3.70px;top:1.89px;font-size:8.4px;color:#141414;-webkit-text-stroke:0.17px #141414;transform:scaleX(1.0200);transform-origin:0 0">Abrahao Borges</div></div>
<div class="clip" style="left:159.50px;top:397.50px;width:134.50px;height:13.4px">
<div class="t" style="left:2.50px;top:1.89px;font-size:8.4px;color:#141414;-webkit-text-stroke:0.17px #141414;transform:scaleX(1.0160);transform-origin:0 0">abrahao_borges@hotmail.com</div></div>
<div class="clip" style="left:294.50px;top:397.50px;width:71.30px;height:13.4px">
<div class="t" style="left:3.00px;top:1.89px;font-size:8.4px;color:#141414;-webkit-text-stroke:0.17px #141414;transform:scaleX(1.0750);transform-origin:0 0">-</div></div>
<div class="clip" style="left:22.30px;top:407.90px;width:136.70px;height:13.4px">
<div class="t" style="left:3.70px;top:1.89px;font-size:8.4px;color:#141414;-webkit-text-stroke:0.17px #141414;transform:scaleX(1.0200);transform-origin:0 0">ABRÃO SCHWARTZ</div></div>
<div class="clip" style="left:159.50px;top:407.90px;width:134.50px;height:13.4px">
<div class="t" style="left:2.50px;top:1.89px;font-size:8.4px;color:#141414;-webkit-text-stroke:0.17px #141414;transform:scaleX(0.8964);transform-origin:0 0">ABRAOSCHWARTZ@HOTMAIL.COM</div></div>
<div class="clip" style="left:294.50px;top:407.90px;width:71.30px;height:13.4px">
<div class="t" style="left:3.00px;top:1.89px;font-size:8.4px;color:#141414;-webkit-text-stroke:0.17px #141414;transform:scaleX(1.0750);transform-origin:0 0">(11) 5511-2233</div></div>
<div class="clip" style="left:22.30px;top:418.30px;width:136.70px;height:13.4px">
<div class="t" style="left:3.70px;top:1.89px;font-size:8.4px;color:#141414;-webkit-text-stroke:0.17px #141414;transform:scaleX(1.0200);transform-origin:0 0">acácia garcia da silva</div></div>
<div class="clip" style="left:159.50px;top:418.30px;width:134.50px;height:13.4px">
<div class="t" style="left:2.50px;top:1.89px;font-size:8.4px;color:#141414;-webkit-text-stroke:0.17px #141414;transform:scaleX(1.0160);transform-origin:0 0">acacia.cassita@hotmail.com</div></div>
<div class="clip" style="left:294.50px;top:418.30px;width:71.30px;height:13.4px">
<div class="t" style="left:3.00px;top:1.89px;font-size:8.4px;color:#141414;-webkit-text-stroke:0.17px #141414;transform:scaleX(1.0750);transform-origin:0 0">(21) 2222-3333</div></div>
<div class="clip" style="left:159.50px;top:428.70px;width:134.50px;height:13.4px">
<div class="t" style="left:2.50px;top:1.89px;font-size:8.4px;color:#141414;-webkit-text-stroke:0.17px #141414;transform:scaleX(1.0160);transform-origin:0 0">acaciaferreiralima@gmail.com</div></div>
<div class="clip" style="left:22.30px;top:439.10px;width:136.70px;height:13.4px">
<div class="t" style="left:3.70px;top:1.89px;font-size:8.4px;color:#141414;-webkit-text-stroke:0.17px #141414;transform:scaleX(1.0200);transform-origin:0 0">ACACIO SANTOS ZANATO</div></div>
<div class="clip" style="left:159.50px;top:439.10px;width:134.50px;height:13.4px">
<div class="t" style="left:2.50px;top:1.89px;font-size:8.4px;color:#141414;-webkit-text-stroke:0.17px #141414;transform:scaleX(1.0160);transform-origin:0 0">acaciaguimaraes@hotmail.com</div></div>
<div class="a" style="left:22.3px;top:178.60px;width:137.7px;height:11.40px;border:1.5px solid #217346"></div>
<div class="a" style="left:156.6px;top:187.20px;width:4.2px;height:4.2px;background:#217346;border:0.6px solid #fff"></div>
<svg class="a" style="left:14px;top:151px" width="8" height="7" viewBox="0 0 8 7"><path d="M6.5 1.5v4h-4z" fill="#b5b5b5"/></svg>
<div class="a" style="left:779.5px;top:151.8px;width:9.8px;height:300px;background:#d8d8d8"></div>
<div class="a" style="left:777.6px;top:158.3px;width:1px;height:200px;background:#c8c8c8"></div>
<div class="a" style="left:779.5px;top:151.8px;width:9.8px;height:10px;background:#fff;border:1px solid #d0d0d0"></div>
<svg class="a" style="left:781px;top:154px" width="7" height="5" viewBox="0 0 7 5"><path d="M1 4l2.5-2.5L6 4z" fill="#444"/></svg>
<div class="a" style="left:779.5px;top:162.6px;width:9.8px;height:11px;background:#fff;border:1px solid #d0d0d0"></div>
<div class="t" style="left:60.0px;top:253.3px;font:bold 91px &quot;Liberation Sans&quot;;color:rgba(0,0,0,0.1);transform:scaleX(1.12);transform-origin:0 0">A</div>
<div class="t" style="left:142.6px;top:253.3px;font:bold 91px &quot;Liberation Sans&quot;;color:rgba(0,0,0,0.1);transform:scaleX(1.12);transform-origin:0 0">R</div>
<div class="t" style="left:232.6px;top:253.3px;font:bold 91px &quot;Liberation Sans&quot;;color:rgba(0,0,0,0.1);transform:scaleX(1.12);transform-origin:0 0">E</div>
<div class="t" style="left:335.0px;top:253.3px;font:bold 91px &quot;Liberation Sans&quot;;color:rgba(0,0,0,0.1);transform:scaleX(1.12);transform-origin:0 0">A</div>
<div class="t" style="left:467.6px;top:253.3px;font:bold 91px &quot;Liberation Sans&quot;;color:rgba(0,0,0,0.1);transform:scaleX(1.12);transform-origin:0 0">L</div>
<div class="t" style="left:525.7px;top:253.3px;font:bold 91px &quot;Liberation Sans&quot;;color:rgba(0,0,0,0.1);transform:scaleX(1.12);transform-origin:0 0">I</div>
<div class="t" style="left:554.6px;top:253.3px;font:bold 91px &quot;Liberation Sans&quot;;color:rgba(0,0,0,0.1);transform:scaleX(1.12);transform-origin:0 0">N</div>
<div class="t" style="left:651.6px;top:253.3px;font:bold 91px &quot;Liberation Sans&quot;;color:rgba(0,0,0,0.1);transform:scaleX(1.12);transform-origin:0 0">G</div>
<svg class="a" style="left:0;top:0" width="800" height="456" viewBox="0 0 800 456">
<path d="M0 398 C1.8 398.8 7.3 401.3 11.0 403.0 C14.7 404.7 18.8 406.4 22.0 408.0 C25.2 409.6 23.7 409.8 30.0 412.5 C36.3 415.2 48.3 420.2 60.0 424.0 C71.7 427.8 86.7 432.1 100.0 435.5 C113.3 438.9 127.5 442.5 140.0 444.3 C152.5 446.1 165.0 446.5 175.0 446.5 C185.0 446.5 192.5 445.4 200.0 444.5 C207.5 443.6 210.0 442.8 220.0 441.0 C230.0 439.2 246.7 436.2 260.0 433.5 C273.3 430.8 286.7 428.0 300.0 424.5 C313.3 421.0 326.7 416.5 340.0 412.5 C353.3 408.5 366.7 404.5 380.0 400.6 C393.3 396.7 406.7 393.2 420.0 389.3 C433.3 385.4 446.7 380.9 460.0 377.3 C473.3 373.7 486.7 370.4 500.0 367.5 C513.3 364.6 526.7 361.7 540.0 360.0 C553.3 358.3 566.7 358.1 580.0 357.5 C593.3 356.9 583.3 356.6 620.0 356.4 C656.7 356.2 770.0 356.4 800.0 356.4 L800 456 L0 456 Z" fill="#e6e6e6"/>
<path d="M0 410 C3.3 411.4 13.3 415.7 20.0 418.7 C26.7 421.7 33.3 425.0 40.0 428.0 C46.7 431.0 53.3 433.9 60.0 436.5 C66.7 439.1 73.3 441.4 80.0 443.5 C86.7 445.6 93.3 447.4 100.0 449.0 C106.7 450.6 113.3 451.8 120.0 452.8 C126.7 453.8 132.5 454.4 140.0 455.0 C147.5 455.6 156.7 456.2 165.0 456.3 C173.3 456.4 180.8 456.1 190.0 455.3 C199.2 454.5 208.3 453.4 220.0 451.5 C231.7 449.6 246.7 446.8 260.0 444.0 C273.3 441.2 286.7 438.3 300.0 435.0 C313.3 431.7 326.7 427.8 340.0 424.0 C353.3 420.2 366.7 416.4 380.0 412.5 C393.3 408.6 406.7 404.3 420.0 400.5 C433.3 396.7 446.7 393.1 460.0 389.5 C473.3 385.9 486.7 381.9 500.0 379.0 C513.3 376.1 526.7 374.1 540.0 372.3 C553.3 370.6 566.7 369.2 580.0 368.5 C593.3 367.8 583.3 367.9 620.0 367.8 C656.7 367.7 770.0 367.8 800.0 367.8 L800 456 L0 456 Z" fill="#4a7350"/>
<rect x="559.5" y="395" width="1.5" height="1.5" fill="#fff"/>
</svg>
</body></html>
